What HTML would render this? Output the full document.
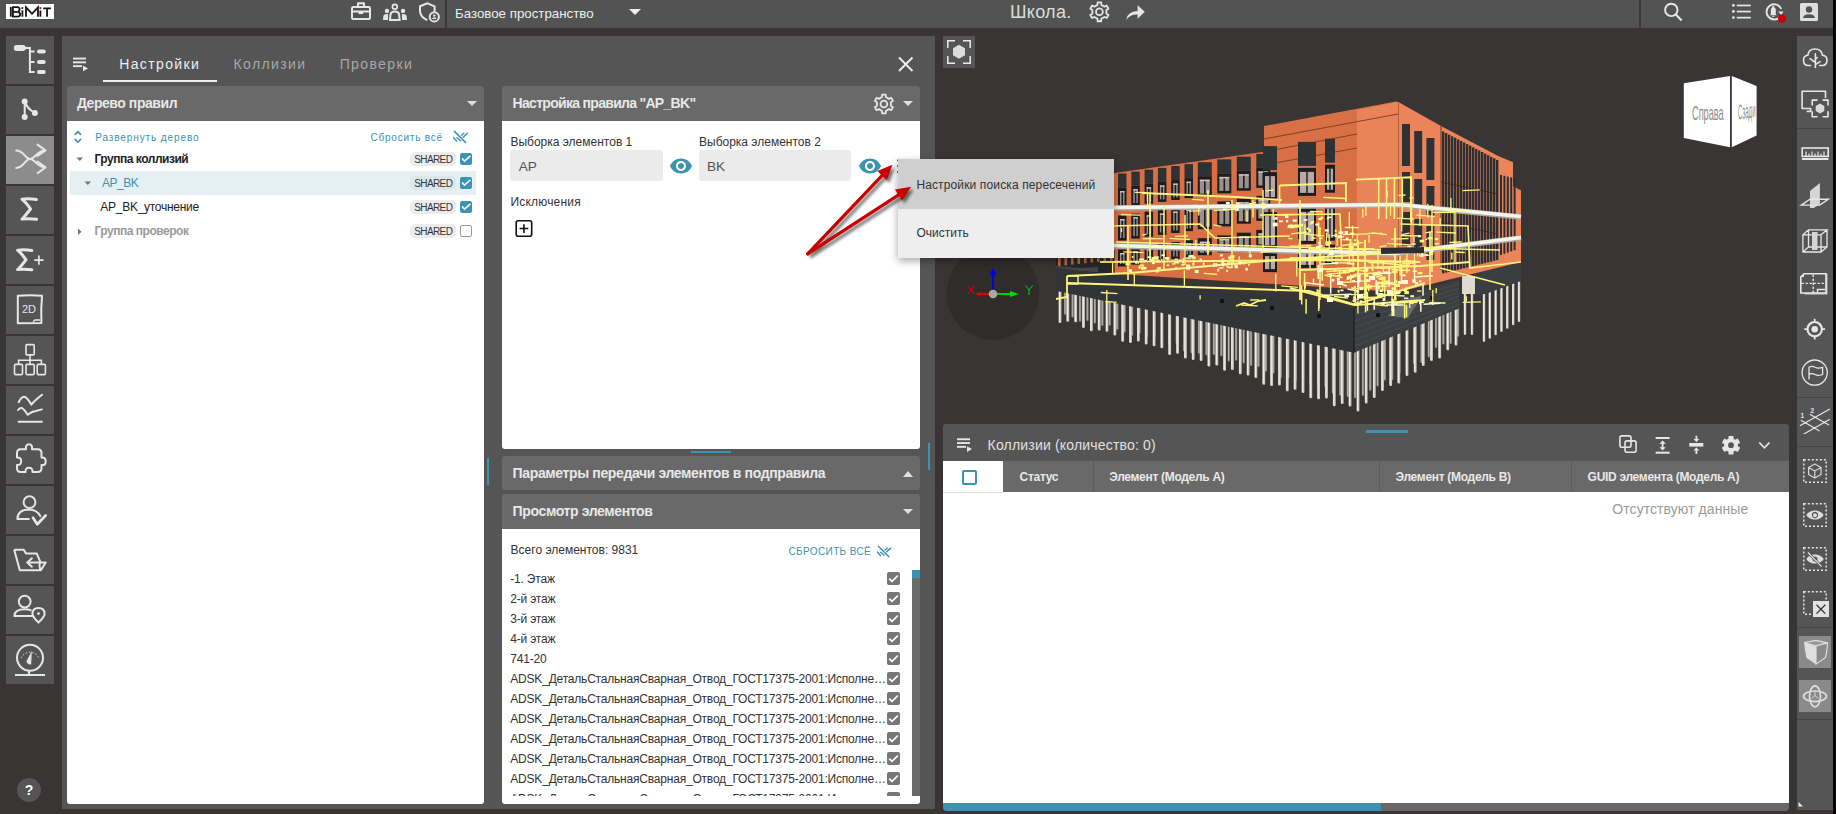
<!DOCTYPE html>
<html><head><meta charset="utf-8"><style>
html,body{margin:0;padding:0;}
body{width:1836px;height:814px;overflow:hidden;position:relative;background:#393534;font-family:"Liberation Sans", sans-serif;}
</style></head><body>
<div style="position:absolute;left:0px;top:0px;width:1836px;height:28px;background:#535353;"></div><div style="position:absolute;left:6px;top:4px;width:48px;height:15px;background:#ffffff;"></div><svg style="position:absolute;left:6px;top:4px;" width="48" height="15" viewBox="0 0 48 15"><g fill="none" stroke="#151515" stroke-width="1.8"><path d="M4.8 3 V12.7"/><path d="M6.9 3.2 H11 Q13.6 3.2 13.6 5.5 Q13.6 7.7 11.2 7.8 Q14.1 7.9 14.1 10.2 Q14.1 12.6 11.2 12.6 H6.9 Z M6.9 7.8 H11"/><path d="M16.4 6.4 V12.7"/><path d="M20 12.7 V3.4 L26 9.8 L32 3.4 V12.7"/><path d="M34.4 6.4 V12.7"/><path d="M37.2 4.3 H44.9 M41.05 4.3 V12.7"/></g><circle cx="16.4" cy="4.1" r="1" fill="#151515"/><circle cx="34.4" cy="4.1" r="1.1" fill="#e00000"/></svg><div style="position:absolute;left:445px;top:0px;width:2px;height:28px;background:#3b3837;"></div><div style="position:absolute;left:1639px;top:0px;width:2px;height:28px;background:#3b3837;"></div><div style="position:absolute;left:455px;top:3.69px;font-size:13.3px;line-height:19px;color:#eeeeee;font-weight:400;letter-spacing:0px;white-space:nowrap;">Базовое пространство</div><svg style="position:absolute;left:629px;top:9px;" width="12" height="6" viewBox="0 0 12 6"><path d="M0 0 L12 0 L6 6 Z" fill="#eee"/></svg><div style="position:absolute;left:1010px;top:-0.04px;font-size:18px;line-height:25px;color:#dddddd;font-weight:400;letter-spacing:0.3px;white-space:nowrap;">Школа.</div><div style="position:absolute;left:6px;top:36px;width:48px;height:48px;background:#555555;"></div><div style="position:absolute;left:6px;top:86px;width:48px;height:48px;background:#555555;"></div><div style="position:absolute;left:6px;top:136px;width:48px;height:48px;background:#8c8c8c;"></div><div style="position:absolute;left:6px;top:186px;width:48px;height:48px;background:#555555;"></div><div style="position:absolute;left:6px;top:236px;width:48px;height:48px;background:#555555;"></div><div style="position:absolute;left:6px;top:286px;width:48px;height:48px;background:#555555;"></div><div style="position:absolute;left:6px;top:336px;width:48px;height:48px;background:#555555;"></div><div style="position:absolute;left:6px;top:386px;width:48px;height:48px;background:#555555;"></div><div style="position:absolute;left:6px;top:436px;width:48px;height:48px;background:#555555;"></div><div style="position:absolute;left:6px;top:486px;width:48px;height:48px;background:#555555;"></div><div style="position:absolute;left:6px;top:536px;width:48px;height:48px;background:#555555;"></div><div style="position:absolute;left:6px;top:586px;width:48px;height:48px;background:#555555;"></div><div style="position:absolute;left:6px;top:636px;width:48px;height:48px;background:#555555;"></div><div style="position:absolute;left:17px;top:778px;width:24px;height:24px;border-radius:50%;background:#555;color:#fff;font-weight:700;font-size:14px;line-height:24px;text-align:center;">?</div><div style="position:absolute;left:62px;top:36px;width:873px;height:773px;background:#555555;"></div><div style="position:absolute;left:119.2px;top:54.15px;font-size:14px;line-height:20px;color:#eeeeee;font-weight:400;letter-spacing:1.37px;white-space:nowrap;">Настройки</div><div style="position:absolute;left:233.6px;top:54.15px;font-size:14px;line-height:20px;color:#a8a8a8;font-weight:400;letter-spacing:1.37px;white-space:nowrap;">Коллизии</div><div style="position:absolute;left:339.7px;top:54.15px;font-size:14px;line-height:20px;color:#a8a8a8;font-weight:400;letter-spacing:1.37px;white-space:nowrap;">Проверки</div><div style="position:absolute;left:103px;top:80px;width:114px;height:2px;background:#eeeeee;"></div><div style="position:absolute;left:67px;top:86px;width:417px;height:35px;background:#696969;border-radius:3px 3px 0 0;"></div><div style="position:absolute;left:67px;top:121px;width:417px;height:683px;background:#ffffff;border-radius:0 0 3px 3px;"></div><div style="position:absolute;left:76.9px;top:92.65px;font-size:14px;line-height:20px;color:#e8e8e8;font-weight:700;letter-spacing:-0.45px;white-space:nowrap;">Дерево правил</div><svg style="position:absolute;left:467px;top:101px;" width="10" height="5" viewBox="0 0 10 5"><path d="M0 0 L10 0 L5 5 Z" fill="#e0e0e0"/></svg><div style="position:absolute;left:95.2px;top:130.53px;font-size:10px;line-height:14px;color:#3a93b3;font-weight:400;letter-spacing:0.9px;white-space:nowrap;">Развернуть дерево</div><div style="position:absolute;left:370.4px;top:130.53px;font-size:10px;line-height:14px;color:#3a93b3;font-weight:400;letter-spacing:0.8px;white-space:nowrap;">Сбросить всё</div><div style="position:absolute;left:70px;top:171px;width:406px;height:24px;background:#e5f0f3;"></div><div style="position:absolute;left:94.4px;top:150.94px;font-size:12px;line-height:17px;color:#222;font-weight:700;letter-spacing:-0.47px;white-space:nowrap;">Группа коллизий</div><div style="position:absolute;left:102px;top:174.94px;font-size:12px;line-height:17px;color:#3a93b3;font-weight:400;letter-spacing:-0.5px;white-space:nowrap;">AP_BK</div><div style="position:absolute;left:100.3px;top:198.94px;font-size:12px;line-height:17px;color:#222;font-weight:400;letter-spacing:-0.27px;white-space:nowrap;">AP_BK_уточнение</div><div style="position:absolute;left:94.4px;top:222.94px;font-size:12px;line-height:17px;color:#9a9a9a;font-weight:700;letter-spacing:-0.47px;white-space:nowrap;">Группа проверок</div><div style="position:absolute;left:410px;top:152px;width:46px;height:14px;background:#ececec;border-radius:5px;"></div><div style="position:absolute;left:414.3px;top:152.73px;font-size:10px;line-height:14px;color:#333;font-weight:400;letter-spacing:-0.62px;white-space:nowrap;">SHARED</div><div style="position:absolute;left:460px;top:153px;width:12px;height:12px;background:#3a93b3;border-radius:2px;"></div><div style="position:absolute;left:410px;top:176px;width:46px;height:14px;background:#dde7ea;border-radius:5px;"></div><div style="position:absolute;left:414.3px;top:176.73px;font-size:10px;line-height:14px;color:#333;font-weight:400;letter-spacing:-0.62px;white-space:nowrap;">SHARED</div><div style="position:absolute;left:460px;top:177px;width:12px;height:12px;background:#3a93b3;border-radius:2px;"></div><div style="position:absolute;left:410px;top:200px;width:46px;height:14px;background:#ececec;border-radius:5px;"></div><div style="position:absolute;left:414.3px;top:200.73px;font-size:10px;line-height:14px;color:#333;font-weight:400;letter-spacing:-0.62px;white-space:nowrap;">SHARED</div><div style="position:absolute;left:460px;top:201px;width:12px;height:12px;background:#3a93b3;border-radius:2px;"></div><div style="position:absolute;left:410px;top:224px;width:46px;height:14px;background:#ececec;border-radius:5px;"></div><div style="position:absolute;left:414.3px;top:224.73px;font-size:10px;line-height:14px;color:#333;font-weight:400;letter-spacing:-0.62px;white-space:nowrap;">SHARED</div><div style="position:absolute;left:460px;top:225px;width:12px;height:12px;background:#fff;border:1px solid #999;box-sizing:border-box;border-radius:2px;"></div><div style="position:absolute;left:502px;top:86px;width:418px;height:35px;background:#696969;border-radius:3px 3px 0 0;"></div><div style="position:absolute;left:502px;top:121px;width:418px;height:328px;background:#ffffff;border-radius:0 0 3px 3px;"></div><div style="position:absolute;left:512.6px;top:92.65px;font-size:14px;line-height:20px;color:#e8e8e8;font-weight:700;letter-spacing:-0.7px;white-space:nowrap;">Настройка правила "AP_BK"</div><svg style="position:absolute;left:903px;top:101px;" width="10" height="5" viewBox="0 0 10 5"><path d="M0 0 L10 0 L5 5 Z" fill="#e0e0e0"/></svg><div style="position:absolute;left:510.4px;top:134.34px;font-size:12px;line-height:17px;color:#333;font-weight:400;letter-spacing:0px;white-space:nowrap;">Выборка элементов 1</div><div style="position:absolute;left:699px;top:134.34px;font-size:12px;line-height:17px;color:#333;font-weight:400;letter-spacing:0px;white-space:nowrap;">Выборка элементов 2</div><div style="position:absolute;left:510px;top:150px;width:153px;height:31px;background:#ebebeb;border-radius:3px;"></div><div style="position:absolute;left:699px;top:150px;width:152px;height:31px;background:#ebebeb;border-radius:3px;"></div><div style="position:absolute;left:518.8px;top:156.79px;font-size:13.6px;line-height:19px;color:#555;font-weight:400;letter-spacing:0px;white-space:nowrap;">AP</div><div style="position:absolute;left:707px;top:156.79px;font-size:13.6px;line-height:19px;color:#555;font-weight:400;letter-spacing:0px;white-space:nowrap;">BK</div><div style="position:absolute;left:510.4px;top:194.34px;font-size:12px;line-height:17px;color:#333;font-weight:400;letter-spacing:0.2px;white-space:nowrap;">Исключения</div><div style="position:absolute;left:691px;top:451px;width:40px;height:2px;background:#3a93b3;"></div><div style="position:absolute;left:502px;top:456px;width:418px;height:34px;background:#696969;border-radius:3px;"></div><div style="position:absolute;left:512.6px;top:463.35px;font-size:14px;line-height:20px;color:#e8e8e8;font-weight:700;letter-spacing:-0.37px;white-space:nowrap;">Параметры передачи элементов в подправила</div><svg style="position:absolute;left:903px;top:471px;" width="10" height="6" viewBox="0 0 10 6"><path d="M0 6 L10 6 L5 0 Z" fill="#e0e0e0"/></svg><div style="position:absolute;left:502px;top:494px;width:418px;height:35px;background:#696969;border-radius:3px 3px 0 0;"></div><div style="position:absolute;left:502px;top:529px;width:418px;height:275px;background:#ffffff;border-radius:0 0 3px 3px;"></div><div style="position:absolute;left:512.6px;top:501.15px;font-size:14px;line-height:20px;color:#e8e8e8;font-weight:700;letter-spacing:-0.37px;white-space:nowrap;">Просмотр элементов</div><svg style="position:absolute;left:903px;top:509px;" width="10" height="5" viewBox="0 0 10 5"><path d="M0 0 L10 0 L5 5 Z" fill="#e0e0e0"/></svg><div style="position:absolute;left:510.6px;top:541.54px;font-size:12px;line-height:17px;color:#333;font-weight:400;letter-spacing:0px;white-space:nowrap;">Всего элементов: 9831</div><div style="position:absolute;left:788.5px;top:544.53px;font-size:10px;line-height:14px;color:#3a93b3;font-weight:400;letter-spacing:0.37px;white-space:nowrap;">СБРОСИТЬ ВСЁ</div><div style="position:absolute;left:502px;top:566px;width:410px;height:230px;overflow:hidden;"><div style="position:absolute;left:8.3px;top:5.24px;width:377px;font-size:12px;line-height:16px;color:#333;white-space:nowrap;overflow:hidden;text-overflow:ellipsis;letter-spacing:-0.2px">-1. Этаж</div><div style="position:absolute;left:384.7px;top:6px;width:13px;height:13px;background:#767676;border-radius:2px;"></div><div style="position:absolute;left:8.3px;top:25.24px;width:377px;font-size:12px;line-height:16px;color:#333;white-space:nowrap;overflow:hidden;text-overflow:ellipsis;letter-spacing:-0.2px">2-й этаж</div><div style="position:absolute;left:384.7px;top:26px;width:13px;height:13px;background:#767676;border-radius:2px;"></div><div style="position:absolute;left:8.3px;top:45.24px;width:377px;font-size:12px;line-height:16px;color:#333;white-space:nowrap;overflow:hidden;text-overflow:ellipsis;letter-spacing:-0.2px">3-й этаж</div><div style="position:absolute;left:384.7px;top:46px;width:13px;height:13px;background:#767676;border-radius:2px;"></div><div style="position:absolute;left:8.3px;top:65.24px;width:377px;font-size:12px;line-height:16px;color:#333;white-space:nowrap;overflow:hidden;text-overflow:ellipsis;letter-spacing:-0.2px">4-й этаж</div><div style="position:absolute;left:384.7px;top:66px;width:13px;height:13px;background:#767676;border-radius:2px;"></div><div style="position:absolute;left:8.3px;top:85.24px;width:377px;font-size:12px;line-height:16px;color:#333;white-space:nowrap;overflow:hidden;text-overflow:ellipsis;letter-spacing:-0.2px">741-20</div><div style="position:absolute;left:384.7px;top:86px;width:13px;height:13px;background:#767676;border-radius:2px;"></div><div style="position:absolute;left:8.3px;top:105.24px;width:377px;font-size:12px;line-height:16px;color:#333;white-space:nowrap;overflow:hidden;text-overflow:ellipsis;letter-spacing:-0.2px">ADSK_ДетальСтальнаяСварная_Отвод_ГОСТ17375-2001:Исполнение</div><div style="position:absolute;left:384.7px;top:106px;width:13px;height:13px;background:#767676;border-radius:2px;"></div><div style="position:absolute;left:8.3px;top:125.24px;width:377px;font-size:12px;line-height:16px;color:#333;white-space:nowrap;overflow:hidden;text-overflow:ellipsis;letter-spacing:-0.2px">ADSK_ДетальСтальнаяСварная_Отвод_ГОСТ17375-2001:Исполнение</div><div style="position:absolute;left:384.7px;top:126px;width:13px;height:13px;background:#767676;border-radius:2px;"></div><div style="position:absolute;left:8.3px;top:145.24px;width:377px;font-size:12px;line-height:16px;color:#333;white-space:nowrap;overflow:hidden;text-overflow:ellipsis;letter-spacing:-0.2px">ADSK_ДетальСтальнаяСварная_Отвод_ГОСТ17375-2001:Исполнение</div><div style="position:absolute;left:384.7px;top:146px;width:13px;height:13px;background:#767676;border-radius:2px;"></div><div style="position:absolute;left:8.3px;top:165.24px;width:377px;font-size:12px;line-height:16px;color:#333;white-space:nowrap;overflow:hidden;text-overflow:ellipsis;letter-spacing:-0.2px">ADSK_ДетальСтальнаяСварная_Отвод_ГОСТ17375-2001:Исполнение</div><div style="position:absolute;left:384.7px;top:166px;width:13px;height:13px;background:#767676;border-radius:2px;"></div><div style="position:absolute;left:8.3px;top:185.24px;width:377px;font-size:12px;line-height:16px;color:#333;white-space:nowrap;overflow:hidden;text-overflow:ellipsis;letter-spacing:-0.2px">ADSK_ДетальСтальнаяСварная_Отвод_ГОСТ17375-2001:Исполнение</div><div style="position:absolute;left:384.7px;top:186px;width:13px;height:13px;background:#767676;border-radius:2px;"></div><div style="position:absolute;left:8.3px;top:205.24px;width:377px;font-size:12px;line-height:16px;color:#333;white-space:nowrap;overflow:hidden;text-overflow:ellipsis;letter-spacing:-0.2px">ADSK_ДетальСтальнаяСварная_Отвод_ГОСТ17375-2001:Исполнение</div><div style="position:absolute;left:384.7px;top:206px;width:13px;height:13px;background:#767676;border-radius:2px;"></div><div style="position:absolute;left:8.3px;top:225.24px;width:377px;font-size:12px;line-height:16px;color:#333;white-space:nowrap;overflow:hidden;text-overflow:ellipsis;letter-spacing:-0.2px">ADSK_ДетальСтальнаяСварная_Отвод_ГОСТ17375-2001:Исполнение</div><div style="position:absolute;left:384.7px;top:226px;width:13px;height:13px;background:#767676;border-radius:2px;"></div></div><div style="position:absolute;left:912px;top:570px;width:8px;height:226px;background:#6b6b6b;"></div><div style="position:absolute;left:912px;top:570px;width:8px;height:8px;background:#3a93b3;"></div><div style="position:absolute;left:487px;top:458px;width:2px;height:27px;background:#3a93b3;"></div><div style="position:absolute;left:928px;top:443px;width:2px;height:27px;background:#3a93b3;"></div><div style="position:absolute;left:943px;top:36px;width:32px;height:32px;background:#555555;"></div><div style="position:absolute;left:943px;top:424px;width:846px;height:37px;background:#555555;border-radius:3px 3px 0 0;"></div><div style="position:absolute;left:1366px;top:430px;width:42px;height:3px;background:#3a93b3;"></div><div style="position:absolute;left:987.6px;top:435.15px;font-size:14px;line-height:20px;color:#e0e0e0;font-weight:400;letter-spacing:0.18px;white-space:nowrap;">Коллизии (количество: 0)</div><div style="position:absolute;left:943px;top:461px;width:846px;height:342px;background:#ffffff;"></div><div style="position:absolute;left:1003px;top:461px;width:786px;height:31px;background:#696969;"></div><div style="position:absolute;left:943px;top:492px;width:60px;height:1px;background:#dddddd;"></div><div style="position:absolute;left:1093px;top:461px;width:1px;height:31px;background:#5a5a5a;"></div><div style="position:absolute;left:1379px;top:461px;width:1px;height:31px;background:#5a5a5a;"></div><div style="position:absolute;left:1571px;top:461px;width:1px;height:31px;background:#5a5a5a;"></div><div style="position:absolute;left:1019.6px;top:469.04px;font-size:12px;line-height:17px;color:#e8e8e8;font-weight:700;letter-spacing:-0.3px;white-space:nowrap;">Статус</div><div style="position:absolute;left:1109.2px;top:469.04px;font-size:12px;line-height:17px;color:#e8e8e8;font-weight:700;letter-spacing:-0.3px;white-space:nowrap;">Элемент (Модель А)</div><div style="position:absolute;left:1395.5px;top:469.04px;font-size:12px;line-height:17px;color:#e8e8e8;font-weight:700;letter-spacing:-0.3px;white-space:nowrap;">Элемент (Модель В)</div><div style="position:absolute;left:1587.6px;top:469.04px;font-size:12px;line-height:17px;color:#e8e8e8;font-weight:700;letter-spacing:-0.3px;white-space:nowrap;">GUID элемента (Модель А)</div><div style="position:absolute;left:961.5px;top:469.5px;width:15px;height:15px;border:2px solid #3a93b3;box-sizing:border-box;border-radius:2px;"></div><div style="position:absolute;left:1612.3px;top:498.85px;font-size:14px;line-height:20px;color:#9a9a9a;font-weight:400;letter-spacing:0.07px;white-space:nowrap;">Отсутствуют данные</div><div style="position:absolute;left:943px;top:803px;width:846px;height:8px;background:#686868;border-radius:0 0 4px 4px;"></div><div style="position:absolute;left:943px;top:803px;width:438px;height:8px;background:#3a93b3;border-radius:0 0 0 4px;"></div><div style="position:absolute;left:1797px;top:36px;width:36px;height:774px;background:#555555;"></div><div style="position:absolute;left:1797px;top:128px;width:36px;height:1px;background:#444;"></div><div style="position:absolute;left:1797px;top:397px;width:36px;height:1px;background:#444;"></div><div style="position:absolute;left:1797px;top:446px;width:36px;height:1px;background:#444;"></div><div style="position:absolute;left:1797px;top:627px;width:36px;height:1px;background:#444;"></div><div style="position:absolute;left:1797px;top:719px;width:36px;height:1px;background:#444;"></div><div style="position:absolute;left:1799px;top:636px;width:32px;height:32px;background:#8a8a8a;"></div><div style="position:absolute;left:1799px;top:680px;width:32px;height:32px;background:#8a8a8a;"></div><div style="position:absolute;left:1833px;top:0px;width:3px;height:814px;background:#050505;"></div><svg style="position:absolute;left:348px;top:0px;" width="26" height="24" viewBox="0 0 26 24"><g fill="none" stroke="#e6e6e6" stroke-width="2" stroke-linejoin="round"><rect x="4" y="7" width="18" height="12" rx="1.2"/><path d="M10 7 V3.2 H16 V7"/><path d="M4 11.5 H22"/></g><rect x="10.6" y="11.5" width="4.5" height="2.6" fill="#e6e6e6"/></svg><svg style="position:absolute;left:380px;top:0px;" width="30" height="24" viewBox="0 0 30 24"><g fill="none" stroke="#e6e6e6" stroke-width="2"><circle cx="14.8" cy="6.8" r="2.4" stroke-width="1.7"/><path d="M10 20 L10.5 14.5 Q11 11.6 14.8 11.6 Q18.6 11.6 19.1 14.5 L19.6 20 Z"/></g><g fill="#e6e6e6"><circle cx="7" cy="10.9" r="2.2"/><circle cx="23" cy="10.9" r="2.2"/><path d="M3 20 L3.3 16 Q3.8 14 7.2 14 L8.1 14 L8 20 Z"/><path d="M27 20 L26.7 16 Q26.2 14 22.8 14 L21.9 14 L22 20 Z"/></g></svg><svg style="position:absolute;left:418px;top:0px;" width="24" height="24" viewBox="0 0 24 24"><path d="M9.3 20.2 Q2 16.8 2 11 V6.3 L9.5 3.3 L16.6 6.3 V11.6" fill="none" stroke="#e6e6e6" stroke-width="2" stroke-linejoin="round"/><circle cx="16.3" cy="16.9" r="4.6" fill="#535353" stroke="#e6e6e6" stroke-width="2"/><circle cx="16.3" cy="15.6" r="1.2" fill="#e6e6e6"/><path d="M14 19 Q14.3 17.3 16.3 17.3 Q18.3 17.3 18.6 19 Z" fill="#e6e6e6"/></svg><svg style="position:absolute;left:1087px;top:0px;" width="25" height="24" viewBox="0 0 25 24"><path d="M10.46 4.87 L10.60 2.37 L14.20 2.37 L14.34 4.87 L17.44 6.66 L19.67 5.53 L21.47 8.64 L19.37 10.01 L19.37 13.59 L21.47 14.96 L19.67 18.07 L17.44 16.94 L14.34 18.73 L14.20 21.23 L10.60 21.23 L10.46 18.73 L7.36 16.94 L5.13 18.07 L3.33 14.96 L5.43 13.59 L5.43 10.01 L3.33 8.64 L5.13 5.53 L7.36 6.66 Z" fill="none" stroke="#e6e6e6" stroke-width="1.8" stroke-linejoin="round"/><circle cx="12.4" cy="11.8" r="3.4" fill="none" stroke="#e6e6e6" stroke-width="1.8"/></svg><svg style="position:absolute;left:1124px;top:2px;" width="24" height="20" viewBox="0 0 24 20"><path d="M2.2 17.8 Q3.5 9.5 13.6 9.1 L13.6 3.2 L20.8 9.8 L13.6 16.8 L13.6 12.6 Q6.6 12.2 2.2 17.8 Z" fill="#e6e6e6"/></svg><svg style="position:absolute;left:1660px;top:0px;" width="26" height="24" viewBox="0 0 26 24"><circle cx="11.3" cy="9.9" r="6.2" fill="none" stroke="#e6e6e6" stroke-width="1.9"/><path d="M15.6 14.3 L21.6 20.5" stroke="#e6e6e6" stroke-width="2.1"/></svg><svg style="position:absolute;left:1730px;top:0px;" width="24" height="24" viewBox="0 0 24 24"><g fill="#e6e6e6"><circle cx="3.4" cy="5.4" r="1.4"/><circle cx="3.4" cy="11.5" r="1.4"/><circle cx="3.4" cy="17.6" r="1.4"/><rect x="6.8" y="4.6" width="14" height="1.7"/><rect x="6.8" y="10.7" width="14" height="1.7"/><rect x="6.8" y="16.8" width="14" height="1.7"/></g></svg><svg style="position:absolute;left:1762px;top:0px;" width="28" height="26" viewBox="0 0 28 26"><path d="M18.2 16.5 A7.6 7.6 0 1 1 19.2 9" fill="none" stroke="#e6e6e6" stroke-width="1.9"/><path d="M16 11.5 L21.5 11.5 L19.3 15 Z" fill="#e6e6e6"/><path d="M8 15.2 L8.8 14 V10.5 Q8.8 7.3 11.3 7 Q13.8 7.3 13.8 10.5 V14 L14.6 15.2 Z" fill="#e6e6e6"/><circle cx="11.3" cy="6.6" r="0.9" fill="#e6e6e6"/><rect x="10.2" y="15.8" width="2.2" height="1" fill="#e6e6e6"/><circle cx="20" cy="18.7" r="4.1" fill="#c8000a"/></svg><svg style="position:absolute;left:1799px;top:2px;" width="20" height="20" viewBox="0 0 20 20"><rect x="1" y="1" width="18" height="18" rx="1.6" fill="#dedede"/><circle cx="10" cy="7.5" r="3.2" fill="#535353"/><path d="M4 16 Q4.3 12.2 10 12.2 Q15.7 12.2 16 16 Z" fill="#535353"/></svg><svg style="position:absolute;left:6px;top:36px;" width="48" height="48" viewBox="0 0 48 48"><rect x="7.8" y="9" width="12" height="6" rx="3" fill="#e6e6e6"/><path d="M19 12 H23.9 V35.9 H28.6 M23.9 15.6 H28.6 M23.9 25.9 H28.6" fill="none" stroke="#e6e6e6" stroke-width="2"/><rect x="31" y="13.6" width="8.7" height="4" rx="2" fill="#e6e6e6"/><rect x="31" y="23.9" width="8.7" height="4" rx="2" fill="#e6e6e6"/><rect x="31" y="33.9" width="8.7" height="4" rx="2" fill="#e6e6e6"/></svg><svg style="position:absolute;left:6px;top:86px;" width="48" height="48" viewBox="0 0 48 48"><path d="M18.7 15.6 V30.9 M18.7 15.6 Q21 22.5 28.9 27" fill="none" stroke="#e6e6e6" stroke-width="2" stroke-linecap="round" stroke-linejoin="round"/><circle cx="18.7" cy="15.6" r="3" fill="#e6e6e6"/><circle cx="18.7" cy="30.9" r="3" fill="#e6e6e6"/><circle cx="28.9" cy="27" r="3" fill="#e6e6e6"/></svg><svg style="position:absolute;left:6px;top:136px;" width="48" height="48" viewBox="0 0 48 48"><path d="M10.2 14.4 C18 14.4 19 22.9 24 22.9 C29 22.9 31 14.4 39.3 14.4 M10.2 31.9 C18 31.9 19 22.9 24 22.9 C29 22.9 31 31.4 39.3 31.4 M31.5 8.6 L39.5 14.4 L31.5 19.9 M31.5 25.5 L39.5 31.4 L31.5 37.2" fill="none" stroke="#e6e6e6" stroke-width="2" stroke-linecap="round" stroke-linejoin="round"/></svg><svg style="position:absolute;left:6px;top:186px;" width="48" height="48" viewBox="0 0 48 48"><path d="M16 13.2 Q23 12.3 30.4 13.6 M16.6 13.6 Q21 17.5 24.6 23 Q20.5 28 16.6 32.6 M16 33 Q23 32.2 30.6 33.2" fill="none" stroke="#e6e6e6" stroke-width="3" stroke-linecap="round" stroke-linejoin="round"/></svg><svg style="position:absolute;left:6px;top:236px;" width="48" height="48" viewBox="0 0 48 48"><path d="M11.6 14.2 Q18.5 13.3 25.8 14.6 M12.2 14.6 Q16.4 18.5 20 23.8 Q16 29 12.2 33.2 M11.6 33.6 Q18.5 32.8 25.8 33.8" fill="none" stroke="#e6e6e6" stroke-width="3" stroke-linecap="round" stroke-linejoin="round"/><path d="M28.3 24.1 H37.6 M32.9 19.5 V28.8" stroke="#e6e6e6" stroke-width="1.7"/></svg><svg style="position:absolute;left:6px;top:286px;" width="48" height="48" viewBox="0 0 48 48"><path d="M11.8 9.8 Q24 8.6 36 9.8 Q34.8 23 35.4 37 L11.8 37.2 Z" fill="none" stroke="#e6e6e6" stroke-width="2" stroke-linecap="round" stroke-linejoin="round"/><text x="23" y="27.2" font-family="Liberation Sans" font-size="11" fill="#e6e6e6" text-anchor="middle">2D</text><path d="M27 36 L29 34 H34" stroke="#e6e6e6" stroke-width="1.4" fill="none"/></svg><svg style="position:absolute;left:6px;top:336px;" width="48" height="48" viewBox="0 0 48 48"><g fill="none" stroke="#e6e6e6" stroke-width="1.6"><rect x="20" y="8.6" width="8.2" height="10.3" rx="1"/><path d="M24.1 18.9 V28.4 M12.6 28.4 V24.2 H35.4 V28.4"/><rect x="8.5" y="28.4" width="8" height="10.2" rx="1"/><rect x="20" y="28.4" width="8.2" height="10.2" rx="1"/><rect x="31.2" y="28.4" width="8.2" height="10.2" rx="1"/></g></svg><svg style="position:absolute;left:6px;top:386px;" width="48" height="48" viewBox="0 0 48 48"><path d="M12.6 16.2 Q15.5 11 18 10.8 Q21 11 25.3 18.6 Q29 14 36.1 8.7 M12 24 Q14 21.5 16 22 Q19 24 21.7 28.8 Q26 25.5 28.9 25.2 L35.9 23.4 M12.6 35.7 H35.9" fill="none" stroke="#e6e6e6" stroke-width="2" stroke-linecap="round" stroke-linejoin="round"/></svg><svg style="position:absolute;left:6px;top:436px;" width="48" height="48" viewBox="0 0 48 48"><path d="M11 17 Q11 13.2 14.5 13.2 H20 Q19.4 8.3 23 8.3 Q26.6 8.3 26 13.2 H31.7 Q35.5 13.2 35.5 17 V21.5 Q39.7 21 39.7 25.3 Q39.7 29.6 35.5 29.1 V32.3 Q35.5 36 31.7 36 H26.5 Q26.8 31.8 23 31.8 Q19.2 31.8 19.5 36 H14.5 Q11 36 11 32.3 V29.1 Q15.2 29.3 15.2 25.3 Q15.2 21.3 11 21.5 Z" fill="none" stroke="#e6e6e6" stroke-width="2" stroke-linecap="round" stroke-linejoin="round"/></svg><svg style="position:absolute;left:6px;top:486px;" width="48" height="48" viewBox="0 0 48 48"><circle cx="23.5" cy="16.2" r="5.9" fill="none" stroke="#e6e6e6" stroke-width="2" stroke-linecap="round" stroke-linejoin="round"/><path d="M22.8 33 H11.4 Q11.6 23.4 22.9 23.4 Q31 23.6 34.3 30" fill="none" stroke="#e6e6e6" stroke-width="2" stroke-linecap="round" stroke-linejoin="round"/><path d="M27 31.8 L31.3 38.2 L39.7 29.4" fill="none" stroke="#e6e6e6" stroke-width="2.8" stroke-linecap="round" stroke-linejoin="round"/></svg><svg style="position:absolute;left:6px;top:536px;" width="48" height="48" viewBox="0 0 48 48"><path d="M8.4 14.4 Q8.4 13.8 9.2 13.8 H17.8 L19.9 17.4 H30.7 L34.3 25.9 M39.7 26.5 L34.9 34.3 H13.8 L8.4 14.4 M34.3 34 Q33 30 33.8 26.5 H39.7 M34.3 26.5 H21.2 M25.9 22.3 L21.2 26.5 L25.9 30.7" fill="none" stroke="#e6e6e6" stroke-width="2" stroke-linecap="round" stroke-linejoin="round"/></svg><svg style="position:absolute;left:6px;top:586px;" width="48" height="48" viewBox="0 0 48 48"><circle cx="18.7" cy="15.6" r="5.9" fill="none" stroke="#e6e6e6" stroke-width="2" stroke-linecap="round" stroke-linejoin="round"/><path d="M27 30 H8.4 Q8.6 23.2 18.7 23.2 Q22.5 23.2 24.7 24.2" fill="none" stroke="#e6e6e6" stroke-width="2" stroke-linecap="round" stroke-linejoin="round"/><path d="M32.5 36.6 Q26.4 31 26.4 27.6 Q26.4 21.9 32.5 21.9 Q38.6 21.9 38.6 27.6 Q38.6 31 32.5 36.6 Z" fill="none" stroke="#e6e6e6" stroke-width="2" stroke-linecap="round" stroke-linejoin="round"/><circle cx="32.5" cy="27.6" r="1.4" fill="#e6e6e6"/></svg><svg style="position:absolute;left:6px;top:636px;" width="48" height="48" viewBox="0 0 48 48"><circle cx="24" cy="21.8" r="13" fill="none" stroke="#e6e6e6" stroke-width="2"/><path d="M9 39 H39 M23 34.8 V39" stroke="#e6e6e6" stroke-width="2.2"/><path d="M20.3 25.8 L25.8 14.8 L25.2 28.3 Q22.5 29.5 20.3 25.8 Z" fill="#e6e6e6"/><path d="M15 22 A10 10 0 0 1 33 22" fill="none" stroke="#e6e6e6" stroke-width="1" stroke-dasharray="1.5 1.8"/></svg><svg style="position:absolute;left:70px;top:55px;" width="20" height="18" viewBox="0 0 20 18"><g fill="#e6e6e6"><rect x="3" y="2.6" width="13" height="1.9"/><rect x="3" y="6.4" width="13" height="1.9"/><rect x="3" y="10.2" width="9" height="1.9"/><path d="M13 10.5 L18 13.4 L13 16.3 Z"/></g></svg><svg style="position:absolute;left:895px;top:54px;" width="22" height="22" viewBox="0 0 22 22"><path d="M4 3.5 L17.5 17 M17.5 3.5 L4 17" stroke="#eeeeee" stroke-width="1.9"/></svg><svg style="position:absolute;left:70px;top:125px;" width="16" height="22" viewBox="0 0 16 22"><path d="M5.2 9.4 L8 6.6 L10.6 9.4 M5.2 14.4 L8 17.2 L10.6 14.4" fill="none" stroke="#3a93b3" stroke-width="1.6" stroke-linecap="round" stroke-linejoin="round"/></svg><svg style="position:absolute;left:453px;top:130px;" width="18" height="16" viewBox="0 0 18 16"><g stroke="#3a93b3" stroke-width="1.5" stroke-linecap="round" transform="scale(1.0)"><path d="M1.4 1.4 L12.5 12.4"/><path d="M0.3 7.4 L3.6 11"/><path d="M3.9 7.7 L7.5 10.8"/><path d="M8.6 5.2 L10.8 3.3"/><path d="M10.2 7.2 L14.4 3.3"/></g></svg><svg style="position:absolute;left:876.5px;top:545px;" width="18" height="16" viewBox="0 0 18 16"><g stroke="#3a93b3" stroke-width="1.5" stroke-linecap="round" transform="scale(0.95)"><path d="M1.4 1.4 L12.5 12.4"/><path d="M0.3 7.4 L3.6 11"/><path d="M3.9 7.7 L7.5 10.8"/><path d="M8.6 5.2 L10.8 3.3"/><path d="M10.2 7.2 L14.4 3.3"/></g></svg><svg style="position:absolute;left:460px;top:153px;" width="12" height="12" viewBox="0 0 12 12"><path d="M2 5.4 L4.5 8.2 L10.4 2.8" fill="none" stroke="#fff" stroke-width="1.6"/></svg><svg style="position:absolute;left:460px;top:177px;" width="12" height="12" viewBox="0 0 12 12"><path d="M2 5.4 L4.5 8.2 L10.4 2.8" fill="none" stroke="#fff" stroke-width="1.6"/></svg><svg style="position:absolute;left:460px;top:201px;" width="12" height="12" viewBox="0 0 12 12"><path d="M2 5.4 L4.5 8.2 L10.4 2.8" fill="none" stroke="#fff" stroke-width="1.6"/></svg><svg style="position:absolute;left:76px;top:156px;" width="8" height="6" viewBox="0 0 8 6"><path d="M0.5 1.5 L7 1.5 L3.75 5 Z" fill="#757575"/></svg><svg style="position:absolute;left:84px;top:180px;" width="8" height="6" viewBox="0 0 8 6"><path d="M0.5 1.5 L7 1.5 L3.75 5 Z" fill="#757575"/></svg><svg style="position:absolute;left:77px;top:227px;" width="6" height="9" viewBox="0 0 6 9"><path d="M1 1.5 L4.6 4.8 L1 8 Z" fill="#757575"/></svg><svg style="position:absolute;left:669px;top:154px;" width="24" height="24" viewBox="0 0 24 24"><path d="M12 4.5C7 4.5 2.73 7.61 1 12c1.73 4.39 6 7.5 11 7.5s9.27-3.11 11-7.5c-1.73-4.39-6-7.5-11-7.5zM12 17c-2.76 0-5-2.24-5-5s2.24-5 5-5 5 2.24 5 5-2.24 5-5 5zm0-8c-1.66 0-3 1.34-3 3s1.34 3 3 3 3-1.34 3-3-1.34-3-3-3z" fill="#3a93b3"/></svg><svg style="position:absolute;left:857.5px;top:154px;" width="24" height="24" viewBox="0 0 24 24"><path d="M12 4.5C7 4.5 2.73 7.61 1 12c1.73 4.39 6 7.5 11 7.5s9.27-3.11 11-7.5c-1.73-4.39-6-7.5-11-7.5zM12 17c-2.76 0-5-2.24-5-5s2.24-5 5-5 5 2.24 5 5-2.24 5-5 5zm0-8c-1.66 0-3 1.34-3 3s1.34 3 3 3 3-1.34 3-3-1.34-3-3-3z" fill="#3a93b3"/></svg><svg style="position:absolute;left:513px;top:218px;" width="22" height="22" viewBox="0 0 22 22"><rect x="3.2" y="2.8" width="15.5" height="15.5" rx="2" fill="none" stroke="#111" stroke-width="1.6"/><path d="M10.95 6.2 V15 M6.6 10.55 H15.3" stroke="#111" stroke-width="1.6"/></svg><svg style="position:absolute;left:893px;top:156px;" width="8" height="22" viewBox="0 0 8 22"><g fill="#444"><rect x="4.1" y="3.6" width="1" height="1.6"/><rect x="4.1" y="9.2" width="1" height="1.6"/><rect x="4.1" y="15.2" width="1" height="1.8"/></g></svg><svg style="position:absolute;left:871px;top:91px;" width="25" height="25" viewBox="0 0 25 25"><path d="M10.96 6.07 L11.10 3.57 L14.70 3.57 L14.84 6.07 L17.94 7.86 L20.17 6.73 L21.97 9.84 L19.87 11.21 L19.87 14.79 L21.97 16.16 L20.17 19.27 L17.94 18.14 L14.84 19.93 L14.70 22.43 L11.10 22.43 L10.96 19.93 L7.86 18.14 L5.63 19.27 L3.83 16.16 L5.93 14.79 L5.93 11.21 L3.83 9.84 L5.63 6.73 L7.86 7.86 Z" fill="none" stroke="#e6e6e6" stroke-width="1.8" stroke-linejoin="round"/><circle cx="12.9" cy="13" r="3.4" fill="none" stroke="#e6e6e6" stroke-width="1.8"/></svg><svg style="position:absolute;left:886.7px;top:572px;" width="13" height="13" viewBox="0 0 13 13"><path d="M2.2 6.6 L5 9.4 L10.8 3.6" fill="none" stroke="#fff" stroke-width="1.6"/></svg><svg style="position:absolute;left:886.7px;top:592px;" width="13" height="13" viewBox="0 0 13 13"><path d="M2.2 6.6 L5 9.4 L10.8 3.6" fill="none" stroke="#fff" stroke-width="1.6"/></svg><svg style="position:absolute;left:886.7px;top:612px;" width="13" height="13" viewBox="0 0 13 13"><path d="M2.2 6.6 L5 9.4 L10.8 3.6" fill="none" stroke="#fff" stroke-width="1.6"/></svg><svg style="position:absolute;left:886.7px;top:632px;" width="13" height="13" viewBox="0 0 13 13"><path d="M2.2 6.6 L5 9.4 L10.8 3.6" fill="none" stroke="#fff" stroke-width="1.6"/></svg><svg style="position:absolute;left:886.7px;top:652px;" width="13" height="13" viewBox="0 0 13 13"><path d="M2.2 6.6 L5 9.4 L10.8 3.6" fill="none" stroke="#fff" stroke-width="1.6"/></svg><svg style="position:absolute;left:886.7px;top:672px;" width="13" height="13" viewBox="0 0 13 13"><path d="M2.2 6.6 L5 9.4 L10.8 3.6" fill="none" stroke="#fff" stroke-width="1.6"/></svg><svg style="position:absolute;left:886.7px;top:692px;" width="13" height="13" viewBox="0 0 13 13"><path d="M2.2 6.6 L5 9.4 L10.8 3.6" fill="none" stroke="#fff" stroke-width="1.6"/></svg><svg style="position:absolute;left:886.7px;top:712px;" width="13" height="13" viewBox="0 0 13 13"><path d="M2.2 6.6 L5 9.4 L10.8 3.6" fill="none" stroke="#fff" stroke-width="1.6"/></svg><svg style="position:absolute;left:886.7px;top:732px;" width="13" height="13" viewBox="0 0 13 13"><path d="M2.2 6.6 L5 9.4 L10.8 3.6" fill="none" stroke="#fff" stroke-width="1.6"/></svg><svg style="position:absolute;left:886.7px;top:752px;" width="13" height="13" viewBox="0 0 13 13"><path d="M2.2 6.6 L5 9.4 L10.8 3.6" fill="none" stroke="#fff" stroke-width="1.6"/></svg><svg style="position:absolute;left:886.7px;top:772px;" width="13" height="13" viewBox="0 0 13 13"><path d="M2.2 6.6 L5 9.4 L10.8 3.6" fill="none" stroke="#fff" stroke-width="1.6"/></svg><svg style="position:absolute;left:943px;top:36px;" width="32" height="32" viewBox="0 0 32 32"><path d="M4.8 12 V4.8 H12 M20 4.8 H27.2 V12 M27.2 20 V27.2 H20 M12 27.2 H4.8 V20" fill="none" stroke="#ececec" stroke-width="1.5"/><path d="M16 8.8 L22 12.3 V19.3 L16 22.8 L10 19.3 V12.3 Z" fill="#dcdcdc"/></svg><svg style="position:absolute;left:955px;top:436px;" width="20" height="18" viewBox="0 0 20 18"><g fill="#e6e6e6"><rect x="2" y="2.3" width="13" height="1.9"/><rect x="2" y="6.1" width="13" height="1.9"/><rect x="2" y="9.9" width="9" height="1.9"/><path d="M12 10.2 L17 13.1 L12 16 Z"/></g></svg><svg style="position:absolute;left:1617px;top:433px;" width="22" height="22" viewBox="0 0 22 22"><g fill="none" stroke="#e6e6e6" stroke-width="1.6"><rect x="2.9" y="2.9" width="11.1" height="11.3" rx="2"/><rect x="8" y="7.9" width="11.1" height="11.3" rx="2"/></g></svg><svg style="position:absolute;left:1653px;top:433px;" width="20" height="22" viewBox="0 0 20 22"><g fill="#e6e6e6"><rect x="2.6" y="4" width="14" height="2"/><rect x="2.6" y="18.7" width="14" height="2"/><path d="M9.6 7.5 L12.8 10.8 H10.5 V14.2 H12.8 L9.6 17.4 L6.4 14.2 H8.7 V10.8 H6.4 Z"/></g></svg><svg style="position:absolute;left:1687px;top:433px;" width="20" height="22" viewBox="0 0 20 22"><g fill="#e6e6e6"><rect x="2.3" y="10" width="14" height="3.6"/><path d="M9.4 9 L12.4 6 H10.3 V2.8 H8.5 V6 H6.4 Z"/><path d="M9.4 14.6 L12.4 17.6 H10.3 V21 H8.5 V17.6 H6.4 Z"/></g></svg><svg style="position:absolute;left:1720px;top:434px;" width="22" height="22" viewBox="0 0 22 22"><path d="M9.09 5.09 L9.08 2.61 L12.92 2.61 L12.91 5.09 L15.33 6.49 L17.48 5.24 L19.40 8.57 L17.25 9.80 L17.25 12.60 L19.40 13.83 L17.48 17.16 L15.33 15.91 L12.91 17.31 L12.92 19.79 L9.08 19.79 L9.09 17.31 L6.67 15.91 L4.52 17.16 L2.60 13.83 L4.75 12.60 L4.75 9.80 L2.60 8.57 L4.52 5.24 L6.67 6.49 Z" fill="#e6e6e6" stroke="#e6e6e6" stroke-width="1.2" stroke-linejoin="round"/><circle cx="11" cy="11.2" r="2.9" fill="#555"/></svg><svg style="position:absolute;left:1757px;top:438px;" width="16" height="14" viewBox="0 0 16 14"><path d="M2.3 4.5 L7.4 9.8 L12.5 4.5" fill="none" stroke="#e6e6e6" stroke-width="1.8"/></svg><svg style="position:absolute;left:1797px;top:36px;" width="36" height="32" viewBox="0 0 36 32"><path d="M13.5 29.5 H11.3 Q6.5 29.5 6.5 24.3 Q6.5 19.8 10.8 19.3 Q11.5 13 18 13 Q24.6 13 25.5 19.3 Q30 19.8 30 24.3 Q30 29.5 25 29.5 H22.7 M18.4 17.8 V35.1 M13 22.7 L18.4 26.5 M23 25.6 L18.4 28.6 M20.1 21.6 L18.4 23.1" fill="none" stroke="#e6e6e6" stroke-width="1.6" stroke-linecap="round" stroke-linejoin="round"/></svg><svg style="position:absolute;left:1797px;top:86px;" width="36" height="32" viewBox="0 0 36 32"><path d="M13.7 22.5 H5.1 V5.3 H28.5 V11.5 M13.7 22.5 V25.4 H10.3" fill="none" stroke="#e6e6e6" stroke-width="1.6" stroke-linecap="round" stroke-linejoin="round"/><path d="M15.2 19 V14.1 H20 M26.2 14.1 H31 V19 M31 25.9 V30.8 H26.2 M20 30.8 H15.2 V25.9" fill="none" stroke="#e6e6e6" stroke-width="1.6" stroke-linecap="round" stroke-linejoin="round"/><path d="M23 17.5 L27.3 20 V25 L23 27.5 L18.7 25 V20 Z" fill="#dcdcdc"/></svg><svg style="position:absolute;left:1797px;top:132px;" width="36" height="32" viewBox="0 0 36 32"><rect x="5.2" y="16" width="26" height="8.4" fill="none" stroke="#e6e6e6" stroke-width="1.6"/><rect x="4.9" y="26" width="26.5" height="2" fill="#e6e6e6"/><g stroke="#e6e6e6" stroke-width="1.2"><path d="M9 24 V19.5 M12 24 V21.5 M15 24 V19.5 M18 24 V21.5 M21 24 V19.5 M24 24 V21.5 M27 24 V19.5"/></g></svg><svg style="position:absolute;left:1797px;top:176px;" width="36" height="32" viewBox="0 0 36 32"><path d="M13 14.9 L22.9 7 V28 L13 34.5 Z" fill="#d6d6d6"/><path d="M4.3 29.1 L13 23.2 H31.4 L22.7 29.1 Z" fill="none" stroke="#e6e6e6" stroke-width="1.4"/><path d="M13 23.2 V29.1 H22.7" fill="#d6d6d6"/></svg><svg style="position:absolute;left:1797px;top:222px;" width="36" height="32" viewBox="0 0 36 32"><g fill="none" stroke="#e6e6e6" stroke-width="1.3"><path d="M5.9 12.8 H24 V30 H5.9 Z M5.9 12.8 L11.5 7.8 H30 L24 12.8 M30 7.8 V25 L24 30 M11.5 7.8 V25 H30 M11.5 25 L5.9 30"/></g><path d="M15 10 H20.5 V28 H15 Z" fill="#d4d4d4"/></svg><svg style="position:absolute;left:1797px;top:266px;" width="36" height="32" viewBox="0 0 36 32"><path d="M7.5 7.8 H30.5 V28.6 H7.5 Z" fill="#bdbdbd"/><path d="M3.8 11 L7 7.8 H29 V27 H3.8 Z" fill="#555" stroke="#e6e6e6" stroke-width="1.6"/><path d="M3.8 11 H7 V7.8" fill="#e6e6e6"/><path d="M16.2 8.5 V27 M4.5 17.4 H28.5" stroke="#e6e6e6" stroke-width="1.4" stroke-dasharray="2.4 1.6"/><path d="M20.5 27 V23.5 H28.5" fill="none" stroke="#e6e6e6" stroke-width="1.4"/></svg><svg style="position:absolute;left:1797px;top:313px;" width="36" height="32" viewBox="0 0 36 32"><circle cx="17.7" cy="16.2" r="7.2" fill="none" stroke="#e6e6e6" stroke-width="2.2"/><circle cx="17.7" cy="16.2" r="3.3" fill="#e6e6e6"/><path d="M17.7 5.8 V8.5 M17.7 23.9 V26.6 M7.3 16.2 H10 M25.4 16.2 H28.1" stroke="#e6e6e6" stroke-width="1.8"/></svg><svg style="position:absolute;left:1797px;top:356px;" width="36" height="32" viewBox="0 0 36 32"><circle cx="17.7" cy="16.6" r="12.6" fill="none" stroke="#e6e6e6" stroke-width="1.3"/><path d="M12 23.6 V11.3 Q15 9.5 18 11.3 Q21 13 25.6 11.4 V18.5 Q21 20.3 18 18.5 Q15 16.8 12 18.5" fill="none" stroke="#e6e6e6" stroke-width="1.3"/></svg><svg style="position:absolute;left:1797px;top:402px;" width="36" height="32" viewBox="0 0 36 32"><g stroke="#e6e6e6" stroke-width="1.2"><path d="M2.9 23.7 L32.9 7 M3.4 34 L32.9 17.3 M3.9 18.3 L22.6 29.1 M12.8 12.2 L31.9 23"/></g><circle cx="8.8" cy="21" r="1.1" fill="#e6e6e6"/><circle cx="17.2" cy="26" r="1.1" fill="#e6e6e6"/><text x="3.6" y="16.2" font-family="Liberation Sans" font-size="6.5" font-weight="700" fill="#e6e6e6">1</text><text x="13.4" y="10.6" font-family="Liberation Sans" font-size="6.5" font-weight="700" fill="#e6e6e6">2</text></svg><svg style="position:absolute;left:1802px;top:458px;" width="26" height="26" viewBox="0 0 26 26"><rect x="1.8" y="1.8" width="22.4" height="22.4" fill="none" stroke="#e6e6e6" stroke-width="1.5" stroke-dasharray="2 2"/></svg><svg style="position:absolute;left:1802px;top:502px;" width="26" height="26" viewBox="0 0 26 26"><rect x="1.8" y="1.8" width="22.4" height="22.4" fill="none" stroke="#e6e6e6" stroke-width="1.5" stroke-dasharray="2 2"/></svg><svg style="position:absolute;left:1802px;top:546px;" width="26" height="26" viewBox="0 0 26 26"><rect x="1.8" y="1.8" width="22.4" height="22.4" fill="none" stroke="#e6e6e6" stroke-width="1.5" stroke-dasharray="2 2"/></svg><svg style="position:absolute;left:1802px;top:590px;" width="26" height="26" viewBox="0 0 26 26"><rect x="1.8" y="1.8" width="22.4" height="22.4" fill="none" stroke="#e6e6e6" stroke-width="1.5" stroke-dasharray="2 2"/></svg><svg style="position:absolute;left:1797px;top:455px;" width="36" height="32" viewBox="0 0 36 32"><path d="M17.8 9 L24 12.5 V19.5 L17.8 23 L11.6 19.5 V12.5 Z M11.6 12.5 L17.8 16 L24 12.5 M17.8 16 V23" fill="none" stroke="#d8d8d8" stroke-width="1.2" stroke-linejoin="round"/></svg><svg style="position:absolute;left:1803.4px;top:503px;" width="24" height="24" viewBox="0 0 24 24"><path d="M12 7.4C8 7.4 4.6 9.6 3.4 12c1.2 2.4 4.6 4.6 8.6 4.6s7.4-2.2 8.6-4.6c-1.2-2.4-4.6-4.6-8.6-4.6zM12 15.2c-1.76 0-3.2-1.44-3.2-3.2s1.44-3.2 3.2-3.2 3.2 1.44 3.2 3.2-1.44 3.2-3.2 3.2zm0-5c-1.1 0-2 .9-2 2s.9 2 2 2 2-.9 2-2-.9-2-2-2z" fill="#dedede"/></svg><svg style="position:absolute;left:1803.4px;top:547px;" width="24" height="24" viewBox="0 0 24 24"><path d="M12 7.4C8 7.4 4.6 9.6 3.4 12c1.2 2.4 4.6 4.6 8.6 4.6s7.4-2.2 8.6-4.6c-1.2-2.4-4.6-4.6-8.6-4.6z" fill="#dedede"/><circle cx="12" cy="12" r="2.5" fill="#555"/><path d="M5 5.5 L18.6 19.6" stroke="#555" stroke-width="2.6"/><path d="M5 5.5 L18.6 19.6" stroke="#dedede" stroke-width="1.3"/></svg><div style="position:absolute;left:1813px;top:601px;width:16px;height:16px;background:#e2e2e2;"></div><svg style="position:absolute;left:1813px;top:601px;" width="16" height="16" viewBox="0 0 16 16"><path d="M3.5 3.8 L12.3 12.6 M12.3 3.8 L3.5 12.6" stroke="#333" stroke-width="1.3"/></svg><svg style="position:absolute;left:1797.5px;top:636px;" width="32" height="32" viewBox="0 0 32 32"><path d="M6.1 6.5 L18 4.3 L29.5 6.8 L18 10 Z" fill="#9a9a9a" stroke="#dedede" stroke-width="1.2"/><path d="M6.1 6.5 L18 10 V28.2 L8.5 22 Q6.6 14 6.1 6.5 Z" fill="#dedede"/><path d="M18 10 L29.5 6.8 Q29 16 27.5 21.5 L18 28.2 Z" fill="#8a8a8a" stroke="#dedede" stroke-width="1.2"/></svg><svg style="position:absolute;left:1799px;top:680px;" width="32" height="32" viewBox="0 0 32 32"><g fill="none" stroke="#dedede" stroke-width="1.7"><ellipse cx="16" cy="16.3" rx="11.5" ry="5.3"/><ellipse cx="16" cy="16.3" rx="5.5" ry="10.5"/></g><path d="M16 11.5 V15.5 L12.6 18.6 M16 15.5 L19.4 18.6" fill="none" stroke="#dedede" stroke-width="0.9"/></svg><svg style="position:absolute;left:1798px;top:801px;" width="6" height="6" viewBox="0 0 6 6"><path d="M0.5 5.5 L5 5.5 L0.5 1 Z" fill="#eee"/></svg><svg style="position:absolute;left:0;top:0" width="1836" height="814" viewBox="0 0 1836 814"><rect x="1064.1" y="283.0" width="2.2" height="31.7" rx="1" fill="#8d8c86"/><rect x="1064.5" y="283.0" width="0.9" height="30.7" fill="#b5b4ac"/><rect x="1071.5" y="284.6" width="2.2" height="32.9" rx="1" fill="#8d8c86"/><rect x="1071.9" y="284.6" width="0.9" height="31.9" fill="#b5b4ac"/><rect x="1079.0" y="286.1" width="2.2" height="35.6" rx="1" fill="#8d8c86"/><rect x="1079.4" y="286.1" width="0.9" height="34.6" fill="#b5b4ac"/><rect x="1086.4" y="287.7" width="2.2" height="33.4" rx="1" fill="#8d8c86"/><rect x="1086.8" y="287.7" width="0.9" height="32.4" fill="#b5b4ac"/><rect x="1093.8" y="289.3" width="2.2" height="34.2" rx="1" fill="#8d8c86"/><rect x="1094.2" y="289.3" width="0.9" height="33.2" fill="#b5b4ac"/><rect x="1101.3" y="290.8" width="2.2" height="35.2" rx="1" fill="#8d8c86"/><rect x="1101.7" y="290.8" width="0.9" height="34.2" fill="#b5b4ac"/><rect x="1108.7" y="292.4" width="2.2" height="33.3" rx="1" fill="#8d8c86"/><rect x="1109.1" y="292.4" width="0.9" height="32.3" fill="#b5b4ac"/><rect x="1116.2" y="293.9" width="2.2" height="35.8" rx="1" fill="#8d8c86"/><rect x="1116.6" y="293.9" width="0.9" height="34.8" fill="#b5b4ac"/><rect x="1123.6" y="295.5" width="2.2" height="37.1" rx="1" fill="#8d8c86"/><rect x="1124.0" y="295.5" width="0.9" height="36.1" fill="#b5b4ac"/><rect x="1131.0" y="297.1" width="2.2" height="38.6" rx="1" fill="#8d8c86"/><rect x="1131.4" y="297.1" width="0.9" height="37.6" fill="#b5b4ac"/><rect x="1138.5" y="298.6" width="2.2" height="34.9" rx="1" fill="#8d8c86"/><rect x="1138.9" y="298.6" width="0.9" height="33.9" fill="#b5b4ac"/><rect x="1145.9" y="300.2" width="2.2" height="36.7" rx="1" fill="#8d8c86"/><rect x="1146.3" y="300.2" width="0.9" height="35.7" fill="#b5b4ac"/><rect x="1153.3" y="301.8" width="2.2" height="36.0" rx="1" fill="#8d8c86"/><rect x="1153.7" y="301.8" width="0.9" height="35.0" fill="#b5b4ac"/><rect x="1160.8" y="303.3" width="2.2" height="40.9" rx="1" fill="#8d8c86"/><rect x="1161.2" y="303.3" width="0.9" height="39.9" fill="#b5b4ac"/><rect x="1168.2" y="304.9" width="2.2" height="40.7" rx="1" fill="#8d8c86"/><rect x="1168.6" y="304.9" width="0.9" height="39.7" fill="#b5b4ac"/><rect x="1175.6" y="306.5" width="2.2" height="37.3" rx="1" fill="#8d8c86"/><rect x="1176.0" y="306.5" width="0.9" height="36.3" fill="#b5b4ac"/><rect x="1183.1" y="308.0" width="2.2" height="43.5" rx="1" fill="#8d8c86"/><rect x="1183.5" y="308.0" width="0.9" height="42.5" fill="#b5b4ac"/><rect x="1190.5" y="309.6" width="2.2" height="43.9" rx="1" fill="#8d8c86"/><rect x="1190.9" y="309.6" width="0.9" height="42.9" fill="#b5b4ac"/><rect x="1197.9" y="311.2" width="2.2" height="42.6" rx="1" fill="#8d8c86"/><rect x="1198.3" y="311.2" width="0.9" height="41.6" fill="#b5b4ac"/><rect x="1205.4" y="312.7" width="2.2" height="42.9" rx="1" fill="#8d8c86"/><rect x="1205.8" y="312.7" width="0.9" height="41.9" fill="#b5b4ac"/><rect x="1212.8" y="314.3" width="2.2" height="40.7" rx="1" fill="#8d8c86"/><rect x="1213.2" y="314.3" width="0.9" height="39.7" fill="#b5b4ac"/><rect x="1220.3" y="315.8" width="2.2" height="40.4" rx="1" fill="#8d8c86"/><rect x="1220.7" y="315.8" width="0.9" height="39.4" fill="#b5b4ac"/><rect x="1227.7" y="317.4" width="2.2" height="44.0" rx="1" fill="#8d8c86"/><rect x="1228.1" y="317.4" width="0.9" height="43.0" fill="#b5b4ac"/><rect x="1235.1" y="319.0" width="2.2" height="41.7" rx="1" fill="#8d8c86"/><rect x="1235.5" y="319.0" width="0.9" height="40.7" fill="#b5b4ac"/><rect x="1242.6" y="320.5" width="2.2" height="43.1" rx="1" fill="#8d8c86"/><rect x="1243.0" y="320.5" width="0.9" height="42.1" fill="#b5b4ac"/><rect x="1250.0" y="322.1" width="2.2" height="43.9" rx="1" fill="#8d8c86"/><rect x="1250.4" y="322.1" width="0.9" height="42.9" fill="#b5b4ac"/><rect x="1257.4" y="323.7" width="2.2" height="43.2" rx="1" fill="#8d8c86"/><rect x="1257.8" y="323.7" width="0.9" height="42.2" fill="#b5b4ac"/><rect x="1264.9" y="325.2" width="2.2" height="46.3" rx="1" fill="#8d8c86"/><rect x="1265.3" y="325.2" width="0.9" height="45.3" fill="#b5b4ac"/><rect x="1272.3" y="326.8" width="2.2" height="46.7" rx="1" fill="#8d8c86"/><rect x="1272.7" y="326.8" width="0.9" height="45.7" fill="#b5b4ac"/><rect x="1279.7" y="328.4" width="2.2" height="49.7" rx="1" fill="#8d8c86"/><rect x="1280.1" y="328.4" width="0.9" height="48.7" fill="#b5b4ac"/><rect x="1287.2" y="329.9" width="2.2" height="48.3" rx="1" fill="#8d8c86"/><rect x="1287.6" y="329.9" width="0.9" height="47.3" fill="#b5b4ac"/><rect x="1294.6" y="331.5" width="2.2" height="49.5" rx="1" fill="#8d8c86"/><rect x="1295.0" y="331.5" width="0.9" height="48.5" fill="#b5b4ac"/><rect x="1302.0" y="333.1" width="2.2" height="49.2" rx="1" fill="#8d8c86"/><rect x="1302.4" y="333.1" width="0.9" height="48.2" fill="#b5b4ac"/><rect x="1309.5" y="334.6" width="2.2" height="50.7" rx="1" fill="#8d8c86"/><rect x="1309.9" y="334.6" width="0.9" height="49.7" fill="#b5b4ac"/><rect x="1316.9" y="336.2" width="2.2" height="50.1" rx="1" fill="#8d8c86"/><rect x="1317.3" y="336.2" width="0.9" height="49.1" fill="#b5b4ac"/><rect x="1324.4" y="337.7" width="2.2" height="49.5" rx="1" fill="#8d8c86"/><rect x="1324.8" y="337.7" width="0.9" height="48.5" fill="#b5b4ac"/><rect x="1331.8" y="339.3" width="2.2" height="54.4" rx="1" fill="#8d8c86"/><rect x="1332.2" y="339.3" width="0.9" height="53.4" fill="#b5b4ac"/><rect x="1339.2" y="340.9" width="2.2" height="54.9" rx="1" fill="#8d8c86"/><rect x="1339.6" y="340.9" width="0.9" height="53.9" fill="#b5b4ac"/><rect x="1346.7" y="342.4" width="2.2" height="54.5" rx="1" fill="#8d8c86"/><rect x="1347.1" y="342.4" width="0.9" height="53.5" fill="#b5b4ac"/><rect x="1354.1" y="344.0" width="2.2" height="54.2" rx="1" fill="#8d8c86"/><rect x="1354.5" y="344.0" width="0.9" height="53.2" fill="#b5b4ac"/><rect x="1361.9" y="342.0" width="2.2" height="53.9" rx="1" fill="#8d8c86"/><rect x="1362.3" y="342.0" width="0.9" height="52.9" fill="#b5b4ac"/><rect x="1369.2" y="338.8" width="2.2" height="51.9" rx="1" fill="#8d8c86"/><rect x="1369.6" y="338.8" width="0.9" height="50.9" fill="#b5b4ac"/><rect x="1376.5" y="335.7" width="2.2" height="50.8" rx="1" fill="#8d8c86"/><rect x="1376.9" y="335.7" width="0.9" height="49.8" fill="#b5b4ac"/><rect x="1383.8" y="332.5" width="2.2" height="48.0" rx="1" fill="#8d8c86"/><rect x="1384.2" y="332.5" width="0.9" height="47.0" fill="#b5b4ac"/><rect x="1391.1" y="329.4" width="2.2" height="50.8" rx="1" fill="#8d8c86"/><rect x="1391.5" y="329.4" width="0.9" height="49.8" fill="#b5b4ac"/><rect x="1398.4" y="326.2" width="2.2" height="47.1" rx="1" fill="#8d8c86"/><rect x="1398.8" y="326.2" width="0.9" height="46.1" fill="#b5b4ac"/><rect x="1405.7" y="323.1" width="2.2" height="48.3" rx="1" fill="#8d8c86"/><rect x="1406.1" y="323.1" width="0.9" height="47.3" fill="#b5b4ac"/><rect x="1413.1" y="319.9" width="2.2" height="44.1" rx="1" fill="#8d8c86"/><rect x="1413.5" y="319.9" width="0.9" height="43.1" fill="#b5b4ac"/><rect x="1420.4" y="316.8" width="2.2" height="46.1" rx="1" fill="#8d8c86"/><rect x="1420.8" y="316.8" width="0.9" height="45.1" fill="#b5b4ac"/><rect x="1427.7" y="313.6" width="2.2" height="43.9" rx="1" fill="#8d8c86"/><rect x="1428.1" y="313.6" width="0.9" height="42.9" fill="#b5b4ac"/><rect x="1435.0" y="310.5" width="2.2" height="37.4" rx="1" fill="#8d8c86"/><rect x="1435.4" y="310.5" width="0.9" height="36.4" fill="#b5b4ac"/><rect x="1442.3" y="307.3" width="2.2" height="37.2" rx="1" fill="#8d8c86"/><rect x="1442.7" y="307.3" width="0.9" height="36.2" fill="#b5b4ac"/><rect x="1449.6" y="304.2" width="2.2" height="39.9" rx="1" fill="#8d8c86"/><rect x="1450.0" y="304.2" width="0.9" height="38.9" fill="#b5b4ac"/><rect x="1456.9" y="301.0" width="2.2" height="35.8" rx="1" fill="#8d8c86"/><rect x="1457.3" y="301.0" width="0.9" height="34.8" fill="#b5b4ac"/><rect x="1058.6" y="288.0" width="2.8" height="34.9" rx="1" fill="#c9c8bf"/><rect x="1059.0" y="288.0" width="1.1" height="33.9" fill="#efeee6"/><rect x="1066.4" y="289.6" width="2.8" height="32.1" rx="1" fill="#c9c8bf"/><rect x="1066.8" y="289.6" width="1.1" height="31.1" fill="#efeee6"/><rect x="1074.3" y="291.3" width="2.8" height="30.9" rx="1" fill="#c9c8bf"/><rect x="1074.7" y="291.3" width="1.1" height="29.9" fill="#efeee6"/><rect x="1082.1" y="292.9" width="2.8" height="35.0" rx="1" fill="#c9c8bf"/><rect x="1082.5" y="292.9" width="1.1" height="34.0" fill="#efeee6"/><rect x="1090.0" y="294.6" width="2.8" height="36.6" rx="1" fill="#c9c8bf"/><rect x="1090.4" y="294.6" width="1.1" height="35.6" fill="#efeee6"/><rect x="1097.8" y="296.2" width="2.8" height="34.3" rx="1" fill="#c9c8bf"/><rect x="1098.2" y="296.2" width="1.1" height="33.3" fill="#efeee6"/><rect x="1105.6" y="297.9" width="2.8" height="33.9" rx="1" fill="#c9c8bf"/><rect x="1106.0" y="297.9" width="1.1" height="32.9" fill="#efeee6"/><rect x="1113.5" y="299.5" width="2.8" height="36.1" rx="1" fill="#c9c8bf"/><rect x="1113.9" y="299.5" width="1.1" height="35.1" fill="#efeee6"/><rect x="1121.3" y="301.2" width="2.8" height="40.6" rx="1" fill="#c9c8bf"/><rect x="1121.7" y="301.2" width="1.1" height="39.6" fill="#efeee6"/><rect x="1129.1" y="302.8" width="2.8" height="40.1" rx="1" fill="#c9c8bf"/><rect x="1129.5" y="302.8" width="1.1" height="39.1" fill="#efeee6"/><rect x="1137.0" y="304.5" width="2.8" height="37.0" rx="1" fill="#c9c8bf"/><rect x="1137.4" y="304.5" width="1.1" height="36.0" fill="#efeee6"/><rect x="1144.8" y="306.1" width="2.8" height="38.5" rx="1" fill="#c9c8bf"/><rect x="1145.2" y="306.1" width="1.1" height="37.5" fill="#efeee6"/><rect x="1152.7" y="307.8" width="2.8" height="38.4" rx="1" fill="#c9c8bf"/><rect x="1153.1" y="307.8" width="1.1" height="37.4" fill="#efeee6"/><rect x="1160.5" y="309.4" width="2.8" height="38.8" rx="1" fill="#c9c8bf"/><rect x="1160.9" y="309.4" width="1.1" height="37.8" fill="#efeee6"/><rect x="1168.3" y="311.1" width="2.8" height="44.0" rx="1" fill="#c9c8bf"/><rect x="1168.7" y="311.1" width="1.1" height="43.0" fill="#efeee6"/><rect x="1176.2" y="312.7" width="2.8" height="41.0" rx="1" fill="#c9c8bf"/><rect x="1176.6" y="312.7" width="1.1" height="40.0" fill="#efeee6"/><rect x="1184.0" y="314.4" width="2.8" height="44.0" rx="1" fill="#c9c8bf"/><rect x="1184.4" y="314.4" width="1.1" height="43.0" fill="#efeee6"/><rect x="1191.8" y="316.0" width="2.8" height="44.1" rx="1" fill="#c9c8bf"/><rect x="1192.2" y="316.0" width="1.1" height="43.1" fill="#efeee6"/><rect x="1199.7" y="317.7" width="2.8" height="43.3" rx="1" fill="#c9c8bf"/><rect x="1200.1" y="317.7" width="1.1" height="42.3" fill="#efeee6"/><rect x="1207.5" y="319.3" width="2.8" height="47.3" rx="1" fill="#c9c8bf"/><rect x="1207.9" y="319.3" width="1.1" height="46.3" fill="#efeee6"/><rect x="1215.4" y="321.0" width="2.8" height="44.4" rx="1" fill="#c9c8bf"/><rect x="1215.8" y="321.0" width="1.1" height="43.4" fill="#efeee6"/><rect x="1223.2" y="322.6" width="2.8" height="48.2" rx="1" fill="#c9c8bf"/><rect x="1223.6" y="322.6" width="1.1" height="47.2" fill="#efeee6"/><rect x="1231.0" y="324.3" width="2.8" height="45.8" rx="1" fill="#c9c8bf"/><rect x="1231.4" y="324.3" width="1.1" height="44.8" fill="#efeee6"/><rect x="1238.9" y="325.9" width="2.8" height="48.3" rx="1" fill="#c9c8bf"/><rect x="1239.3" y="325.9" width="1.1" height="47.3" fill="#efeee6"/><rect x="1246.7" y="327.6" width="2.8" height="47.8" rx="1" fill="#c9c8bf"/><rect x="1247.1" y="327.6" width="1.1" height="46.8" fill="#efeee6"/><rect x="1254.5" y="329.2" width="2.8" height="48.9" rx="1" fill="#c9c8bf"/><rect x="1254.9" y="329.2" width="1.1" height="47.9" fill="#efeee6"/><rect x="1262.4" y="330.9" width="2.8" height="53.8" rx="1" fill="#c9c8bf"/><rect x="1262.8" y="330.9" width="1.1" height="52.8" fill="#efeee6"/><rect x="1270.2" y="332.5" width="2.8" height="53.5" rx="1" fill="#c9c8bf"/><rect x="1270.6" y="332.5" width="1.1" height="52.5" fill="#efeee6"/><rect x="1278.1" y="334.2" width="2.8" height="51.3" rx="1" fill="#c9c8bf"/><rect x="1278.5" y="334.2" width="1.1" height="50.3" fill="#efeee6"/><rect x="1285.9" y="335.8" width="2.8" height="55.5" rx="1" fill="#c9c8bf"/><rect x="1286.3" y="335.8" width="1.1" height="54.5" fill="#efeee6"/><rect x="1293.7" y="337.5" width="2.8" height="52.2" rx="1" fill="#c9c8bf"/><rect x="1294.1" y="337.5" width="1.1" height="51.2" fill="#efeee6"/><rect x="1301.6" y="339.1" width="2.8" height="54.0" rx="1" fill="#c9c8bf"/><rect x="1302.0" y="339.1" width="1.1" height="53.0" fill="#efeee6"/><rect x="1309.4" y="340.8" width="2.8" height="57.5" rx="1" fill="#c9c8bf"/><rect x="1309.8" y="340.8" width="1.1" height="56.5" fill="#efeee6"/><rect x="1317.2" y="342.4" width="2.8" height="56.9" rx="1" fill="#c9c8bf"/><rect x="1317.6" y="342.4" width="1.1" height="55.9" fill="#efeee6"/><rect x="1325.1" y="344.1" width="2.8" height="54.4" rx="1" fill="#c9c8bf"/><rect x="1325.5" y="344.1" width="1.1" height="53.4" fill="#efeee6"/><rect x="1332.9" y="345.7" width="2.8" height="60.5" rx="1" fill="#c9c8bf"/><rect x="1333.3" y="345.7" width="1.1" height="59.5" fill="#efeee6"/><rect x="1340.8" y="347.4" width="2.8" height="56.5" rx="1" fill="#c9c8bf"/><rect x="1341.2" y="347.4" width="1.1" height="55.5" fill="#efeee6"/><rect x="1348.6" y="349.0" width="2.8" height="57.5" rx="1" fill="#c9c8bf"/><rect x="1349.0" y="349.0" width="1.1" height="56.5" fill="#efeee6"/><rect x="1356.6" y="349.0" width="2.8" height="62.6" rx="1" fill="#c9c8bf"/><rect x="1357.0" y="349.0" width="1.1" height="61.6" fill="#efeee6"/><rect x="1364.8" y="345.4" width="2.8" height="58.1" rx="1" fill="#c9c8bf"/><rect x="1365.2" y="345.4" width="1.1" height="57.1" fill="#efeee6"/><rect x="1372.9" y="341.8" width="2.8" height="56.1" rx="1" fill="#c9c8bf"/><rect x="1373.3" y="341.8" width="1.1" height="55.1" fill="#efeee6"/><rect x="1381.1" y="338.2" width="2.8" height="52.9" rx="1" fill="#c9c8bf"/><rect x="1381.5" y="338.2" width="1.1" height="51.9" fill="#efeee6"/><rect x="1389.3" y="334.7" width="2.8" height="51.2" rx="1" fill="#c9c8bf"/><rect x="1389.7" y="334.7" width="1.1" height="50.2" fill="#efeee6"/><rect x="1397.4" y="331.1" width="2.8" height="52.3" rx="1" fill="#c9c8bf"/><rect x="1397.8" y="331.1" width="1.1" height="51.3" fill="#efeee6"/><rect x="1405.6" y="327.5" width="2.8" height="48.5" rx="1" fill="#c9c8bf"/><rect x="1406.0" y="327.5" width="1.1" height="47.5" fill="#efeee6"/><rect x="1413.8" y="323.9" width="2.8" height="48.8" rx="1" fill="#c9c8bf"/><rect x="1414.2" y="323.9" width="1.1" height="47.8" fill="#efeee6"/><rect x="1421.9" y="320.3" width="2.8" height="45.6" rx="1" fill="#c9c8bf"/><rect x="1422.3" y="320.3" width="1.1" height="44.6" fill="#efeee6"/><rect x="1430.1" y="316.8" width="2.8" height="44.2" rx="1" fill="#c9c8bf"/><rect x="1430.5" y="316.8" width="1.1" height="43.2" fill="#efeee6"/><rect x="1438.3" y="313.2" width="2.8" height="45.4" rx="1" fill="#c9c8bf"/><rect x="1438.7" y="313.2" width="1.1" height="44.4" fill="#efeee6"/><rect x="1446.4" y="309.6" width="2.8" height="40.7" rx="1" fill="#c9c8bf"/><rect x="1446.8" y="309.6" width="1.1" height="39.7" fill="#efeee6"/><rect x="1454.6" y="306.0" width="2.8" height="39.4" rx="1" fill="#c9c8bf"/><rect x="1455.0" y="306.0" width="1.1" height="38.4" fill="#efeee6"/><rect x="1482.8" y="290.0" width="2.4" height="52.0" rx="1" fill="#c9c8bf"/><rect x="1483.2" y="290.0" width="1.0" height="51.0" fill="#efeee6"/><rect x="1488.6" y="288.0" width="2.4" height="50.7" rx="1" fill="#c9c8bf"/><rect x="1489.0" y="288.0" width="1.0" height="49.7" fill="#efeee6"/><rect x="1494.5" y="286.0" width="2.4" height="49.3" rx="1" fill="#c9c8bf"/><rect x="1494.9" y="286.0" width="1.0" height="48.3" fill="#efeee6"/><rect x="1500.3" y="284.0" width="2.4" height="48.0" rx="1" fill="#c9c8bf"/><rect x="1500.7" y="284.0" width="1.0" height="47.0" fill="#efeee6"/><rect x="1506.1" y="282.0" width="2.4" height="46.7" rx="1" fill="#c9c8bf"/><rect x="1506.5" y="282.0" width="1.0" height="45.7" fill="#efeee6"/><rect x="1512.0" y="280.0" width="2.4" height="45.3" rx="1" fill="#c9c8bf"/><rect x="1512.4" y="280.0" width="1.0" height="44.3" fill="#efeee6"/><rect x="1517.8" y="278.0" width="2.4" height="44.0" rx="1" fill="#c9c8bf"/><rect x="1518.2" y="278.0" width="1.0" height="43.0" fill="#efeee6"/><rect x="1463.8" y="290.0" width="2.4" height="45.0" rx="1" fill="#c9c8bf"/><rect x="1464.2" y="290.0" width="1.0" height="44.0" fill="#efeee6"/><rect x="1470.8" y="290.0" width="2.4" height="45.0" rx="1" fill="#c9c8bf"/><rect x="1471.2" y="290.0" width="1.0" height="44.0" fill="#efeee6"/><polygon points="1474.6,271.0 1521.0,260.0 1521.0,281.0 1485.6,294.0 1474.6,295.0" fill="#3b3e41"/><rect x="1462" y="276" width="13" height="18" fill="#dddbd0"/><polygon points="1398.4,102.0 1441.0,126.0 1497.7,155.8 1513.0,162.3 1513.0,186.0 1521.0,190.6 1521.0,262.0 1398.4,292.0" fill="#ec845a"/><rect x="1442.0" y="131.5" width="2.4" height="141.8" fill="#2c2f32"/><rect x="1445.0" y="133.1" width="2.4" height="139.5" fill="#2c2f32"/><rect x="1448.0" y="134.7" width="2.4" height="137.2" fill="#2c2f32"/><rect x="1451.0" y="136.3" width="2.4" height="134.9" fill="#2c2f32"/><rect x="1454.0" y="137.8" width="2.4" height="132.6" fill="#2c2f32"/><rect x="1457.0" y="139.4" width="2.4" height="130.3" fill="#2c2f32"/><rect x="1460.0" y="141.0" width="2.4" height="127.9" fill="#2c2f32"/><rect x="1463.0" y="142.6" width="2.4" height="125.6" fill="#2c2f32"/><rect x="1466.0" y="144.1" width="2.4" height="123.3" fill="#2c2f32"/><rect x="1469.0" y="145.7" width="2.4" height="121.0" fill="#2c2f32"/><rect x="1472.0" y="147.3" width="2.4" height="118.7" fill="#2c2f32"/><rect x="1475.0" y="148.9" width="2.4" height="116.4" fill="#2c2f32"/><rect x="1478.0" y="150.4" width="2.4" height="114.1" fill="#2c2f32"/><rect x="1481.0" y="152.0" width="2.4" height="111.8" fill="#2c2f32"/><rect x="1484.0" y="153.6" width="2.4" height="109.5" fill="#2c2f32"/><rect x="1487.0" y="155.2" width="2.4" height="107.1" fill="#2c2f32"/><rect x="1490.0" y="156.8" width="2.4" height="104.8" fill="#2c2f32"/><rect x="1493.0" y="158.3" width="2.4" height="102.5" fill="#2c2f32"/><rect x="1496.0" y="159.9" width="2.4" height="100.2" fill="#2c2f32"/><path d="M1441 182.0 L1498 194.0" stroke="#3a2418" stroke-width="0.9" opacity="0.8"/><path d="M1441 222.0 L1498 234.0" stroke="#3a2418" stroke-width="0.9" opacity="0.8"/><rect x="1500.0" y="175.0" width="2" height="80.0" fill="#2c2f32"/><rect x="1503.4" y="175.8" width="2" height="78.0" fill="#2c2f32"/><rect x="1506.8" y="176.6" width="2" height="76.0" fill="#2c2f32"/><rect x="1510.2" y="177.4" width="2" height="74.0" fill="#2c2f32"/><rect x="1513.6" y="178.2" width="2" height="72.0" fill="#2c2f32"/><rect x="1402.0" y="124.0" width="8" height="42" fill="#2f3235"/><rect x="1414.2" y="131.0" width="8" height="42" fill="#2f3235"/><rect x="1426.4" y="138.0" width="8" height="42" fill="#2f3235"/><rect x="1402.0" y="172.0" width="8" height="30" fill="#2f3235"/><rect x="1414.2" y="179.0" width="8" height="30" fill="#2f3235"/><rect x="1426.4" y="186.0" width="8" height="30" fill="#2f3235"/><rect x="1402.0" y="212.0" width="8" height="34" fill="#2f3235"/><rect x="1414.2" y="219.0" width="8" height="34" fill="#2f3235"/><rect x="1426.4" y="226.0" width="8" height="34" fill="#2f3235"/><path d="M1398.4 102 V292" stroke="#5a2a18" stroke-width="1"/><path d="M1441 126 V270" stroke="#5a2a18" stroke-width="0.9"/><polygon points="1056.0,258.0 1114.6,173.0 1264.0,151.8 1264.0,126.1 1395.8,101.6 1398.4,102.0 1398.4,292.0 1056.0,270.0" fill="#d96f45"/><polygon points="1357.0,110.0 1398.4,102.0 1398.4,292.0 1357.0,288.0" fill="#e98459"/><path d="M1264 139 L1398 114 M1264 151.8 L1357 134 M1264 165 L1357 148" stroke="#6a3520" stroke-width="0.8"/><rect x="1118.0" y="173.5" width="8.5" height="14" fill="#2f3235"/><rect x="1118.0" y="187.5" width="8.5" height="20" fill="#1c1d1e"/><rect x="1120.0" y="191.0" width="4.5" height="14" fill="#9d8f8e"/><rect x="1121.5" y="190.5" width="1.6" height="15" fill="#1c1d1e"/><rect x="1120.0" y="191.0" width="4.5" height="1.5" fill="#c9c4c4"/><rect x="1118.0" y="215.5" width="8.5" height="25" fill="#1c1d1e"/><rect x="1120.0" y="219.0" width="4.5" height="19" fill="#9d8f8e"/><rect x="1121.5" y="218.5" width="1.6" height="20" fill="#1c1d1e"/><rect x="1120.0" y="219.0" width="4.5" height="1.5" fill="#c9c4c4"/><rect x="1118.0" y="249.5" width="8.5" height="17" fill="#1c1d1e"/><rect x="1120.0" y="253.0" width="4.5" height="11" fill="#9d8f8e"/><rect x="1121.5" y="252.5" width="1.6" height="12" fill="#1c1d1e"/><rect x="1120.0" y="253.0" width="4.5" height="1.5" fill="#c9c4c4"/><rect x="1131.3" y="171.6" width="8.5" height="14" fill="#2f3235"/><rect x="1131.3" y="185.6" width="8.5" height="20" fill="#1c1d1e"/><rect x="1133.3" y="189.1" width="4.5" height="14" fill="#9d8f8e"/><rect x="1134.8" y="188.6" width="1.6" height="15" fill="#1c1d1e"/><rect x="1133.3" y="189.1" width="4.5" height="1.5" fill="#c9c4c4"/><rect x="1131.3" y="213.6" width="8.5" height="25" fill="#1c1d1e"/><rect x="1133.3" y="217.1" width="4.5" height="19" fill="#9d8f8e"/><rect x="1134.8" y="216.6" width="1.6" height="20" fill="#1c1d1e"/><rect x="1133.3" y="217.1" width="4.5" height="1.5" fill="#c9c4c4"/><rect x="1131.3" y="247.6" width="8.5" height="17" fill="#1c1d1e"/><rect x="1133.3" y="251.1" width="4.5" height="11" fill="#9d8f8e"/><rect x="1134.8" y="250.6" width="1.6" height="12" fill="#1c1d1e"/><rect x="1133.3" y="251.1" width="4.5" height="1.5" fill="#c9c4c4"/><rect x="1144.6" y="169.7" width="8.5" height="14" fill="#2f3235"/><rect x="1144.6" y="183.7" width="8.5" height="20" fill="#1c1d1e"/><rect x="1146.6" y="187.2" width="4.5" height="14" fill="#9d8f8e"/><rect x="1148.0" y="186.7" width="1.6" height="15" fill="#1c1d1e"/><rect x="1146.6" y="187.2" width="4.5" height="1.5" fill="#c9c4c4"/><rect x="1144.6" y="211.7" width="8.5" height="25" fill="#1c1d1e"/><rect x="1146.6" y="215.2" width="4.5" height="19" fill="#9d8f8e"/><rect x="1148.0" y="214.7" width="1.6" height="20" fill="#1c1d1e"/><rect x="1146.6" y="215.2" width="4.5" height="1.5" fill="#c9c4c4"/><rect x="1144.6" y="245.7" width="8.5" height="17" fill="#1c1d1e"/><rect x="1146.6" y="249.2" width="4.5" height="11" fill="#9d8f8e"/><rect x="1148.0" y="248.7" width="1.6" height="12" fill="#1c1d1e"/><rect x="1146.6" y="249.2" width="4.5" height="1.5" fill="#c9c4c4"/><rect x="1157.9" y="167.9" width="8.5" height="14" fill="#2f3235"/><rect x="1157.9" y="181.9" width="8.5" height="20" fill="#1c1d1e"/><rect x="1159.9" y="185.4" width="4.5" height="14" fill="#9d8f8e"/><rect x="1161.3" y="184.9" width="1.6" height="15" fill="#1c1d1e"/><rect x="1159.9" y="185.4" width="4.5" height="1.5" fill="#c9c4c4"/><rect x="1157.9" y="209.9" width="8.5" height="25" fill="#1c1d1e"/><rect x="1159.9" y="213.4" width="4.5" height="19" fill="#9d8f8e"/><rect x="1161.3" y="212.9" width="1.6" height="20" fill="#1c1d1e"/><rect x="1159.9" y="213.4" width="4.5" height="1.5" fill="#c9c4c4"/><rect x="1157.9" y="243.9" width="8.5" height="17" fill="#1c1d1e"/><rect x="1159.9" y="247.4" width="4.5" height="11" fill="#9d8f8e"/><rect x="1161.3" y="246.9" width="1.6" height="12" fill="#1c1d1e"/><rect x="1159.9" y="247.4" width="4.5" height="1.5" fill="#c9c4c4"/><rect x="1171.2" y="166.0" width="8.5" height="14" fill="#2f3235"/><rect x="1171.2" y="180.0" width="8.5" height="20" fill="#1c1d1e"/><rect x="1173.2" y="183.5" width="4.5" height="14" fill="#9d8f8e"/><rect x="1174.6" y="183.0" width="1.6" height="15" fill="#1c1d1e"/><rect x="1173.2" y="183.5" width="4.5" height="1.5" fill="#c9c4c4"/><rect x="1171.2" y="208.0" width="8.5" height="25" fill="#1c1d1e"/><rect x="1173.2" y="211.5" width="4.5" height="19" fill="#9d8f8e"/><rect x="1174.6" y="211.0" width="1.6" height="20" fill="#1c1d1e"/><rect x="1173.2" y="211.5" width="4.5" height="1.5" fill="#c9c4c4"/><rect x="1171.2" y="242.0" width="8.5" height="17" fill="#1c1d1e"/><rect x="1173.2" y="245.5" width="4.5" height="11" fill="#9d8f8e"/><rect x="1174.6" y="245.0" width="1.6" height="12" fill="#1c1d1e"/><rect x="1173.2" y="245.5" width="4.5" height="1.5" fill="#c9c4c4"/><rect x="1184.5" y="164.1" width="8.5" height="14" fill="#2f3235"/><rect x="1184.5" y="178.1" width="8.5" height="20" fill="#1c1d1e"/><rect x="1186.5" y="181.6" width="4.5" height="14" fill="#9d8f8e"/><rect x="1187.9" y="181.1" width="1.6" height="15" fill="#1c1d1e"/><rect x="1186.5" y="181.6" width="4.5" height="1.5" fill="#c9c4c4"/><rect x="1184.5" y="206.1" width="8.5" height="25" fill="#1c1d1e"/><rect x="1186.5" y="209.6" width="4.5" height="19" fill="#9d8f8e"/><rect x="1187.9" y="209.1" width="1.6" height="20" fill="#1c1d1e"/><rect x="1186.5" y="209.6" width="4.5" height="1.5" fill="#c9c4c4"/><rect x="1184.5" y="240.1" width="8.5" height="17" fill="#1c1d1e"/><rect x="1186.5" y="243.6" width="4.5" height="11" fill="#9d8f8e"/><rect x="1187.9" y="243.1" width="1.6" height="12" fill="#1c1d1e"/><rect x="1186.5" y="243.6" width="4.5" height="1.5" fill="#c9c4c4"/><rect x="1197.8" y="162.2" width="14" height="14" fill="#2f3235"/><rect x="1197.8" y="176.2" width="14" height="20" fill="#1c1d1e"/><rect x="1199.8" y="179.7" width="10.0" height="14" fill="#9d8f8e"/><rect x="1204.0" y="179.2" width="1.6" height="15" fill="#1c1d1e"/><rect x="1199.8" y="179.7" width="10.0" height="1.5" fill="#c9c4c4"/><rect x="1197.8" y="204.2" width="14" height="25" fill="#1c1d1e"/><rect x="1199.8" y="207.7" width="10.0" height="19" fill="#9d8f8e"/><rect x="1204.0" y="207.2" width="1.6" height="20" fill="#1c1d1e"/><rect x="1199.8" y="207.7" width="10.0" height="1.5" fill="#c9c4c4"/><rect x="1197.8" y="238.2" width="14" height="17" fill="#1c1d1e"/><rect x="1199.8" y="241.7" width="10.0" height="11" fill="#9d8f8e"/><rect x="1204.0" y="241.2" width="1.6" height="12" fill="#1c1d1e"/><rect x="1199.8" y="241.7" width="10.0" height="1.5" fill="#c9c4c4"/><rect x="1217.3" y="159.4" width="14" height="14" fill="#2f3235"/><rect x="1217.3" y="173.4" width="14" height="20" fill="#1c1d1e"/><rect x="1219.3" y="176.9" width="10.0" height="14" fill="#9d8f8e"/><rect x="1223.5" y="176.4" width="1.6" height="15" fill="#1c1d1e"/><rect x="1219.3" y="176.9" width="10.0" height="1.5" fill="#c9c4c4"/><rect x="1217.3" y="201.4" width="14" height="25" fill="#1c1d1e"/><rect x="1219.3" y="204.9" width="10.0" height="19" fill="#9d8f8e"/><rect x="1223.5" y="204.4" width="1.6" height="20" fill="#1c1d1e"/><rect x="1219.3" y="204.9" width="10.0" height="1.5" fill="#c9c4c4"/><rect x="1217.3" y="235.4" width="14" height="17" fill="#1c1d1e"/><rect x="1219.3" y="238.9" width="10.0" height="11" fill="#9d8f8e"/><rect x="1223.5" y="238.4" width="1.6" height="12" fill="#1c1d1e"/><rect x="1219.3" y="238.9" width="10.0" height="1.5" fill="#c9c4c4"/><rect x="1236.8" y="156.7" width="14" height="14" fill="#2f3235"/><rect x="1236.8" y="170.7" width="14" height="20" fill="#1c1d1e"/><rect x="1238.8" y="174.2" width="10.0" height="14" fill="#9d8f8e"/><rect x="1243.0" y="173.7" width="1.6" height="15" fill="#1c1d1e"/><rect x="1238.8" y="174.2" width="10.0" height="1.5" fill="#c9c4c4"/><rect x="1236.8" y="198.7" width="14" height="25" fill="#1c1d1e"/><rect x="1238.8" y="202.2" width="10.0" height="19" fill="#9d8f8e"/><rect x="1243.0" y="201.7" width="1.6" height="20" fill="#1c1d1e"/><rect x="1238.8" y="202.2" width="10.0" height="1.5" fill="#c9c4c4"/><rect x="1236.8" y="232.7" width="14" height="17" fill="#1c1d1e"/><rect x="1238.8" y="236.2" width="10.0" height="11" fill="#9d8f8e"/><rect x="1243.0" y="235.7" width="1.6" height="12" fill="#1c1d1e"/><rect x="1238.8" y="236.2" width="10.0" height="1.5" fill="#c9c4c4"/><rect x="1256.3" y="153.9" width="14" height="14" fill="#2f3235"/><rect x="1256.3" y="167.9" width="14" height="20" fill="#1c1d1e"/><rect x="1258.3" y="171.4" width="10.0" height="14" fill="#9d8f8e"/><rect x="1262.5" y="170.9" width="1.6" height="15" fill="#1c1d1e"/><rect x="1258.3" y="171.4" width="10.0" height="1.5" fill="#c9c4c4"/><rect x="1256.3" y="195.9" width="14" height="25" fill="#1c1d1e"/><rect x="1258.3" y="199.4" width="10.0" height="19" fill="#9d8f8e"/><rect x="1262.5" y="198.9" width="1.6" height="20" fill="#1c1d1e"/><rect x="1258.3" y="199.4" width="10.0" height="1.5" fill="#c9c4c4"/><rect x="1256.3" y="229.9" width="14" height="17" fill="#1c1d1e"/><rect x="1258.3" y="233.4" width="10.0" height="11" fill="#9d8f8e"/><rect x="1262.5" y="232.9" width="1.6" height="12" fill="#1c1d1e"/><rect x="1258.3" y="233.4" width="10.0" height="1.5" fill="#c9c4c4"/><polygon points="1056.0,256.0 1114.6,250.0 1114.6,276.0 1056.0,268.0" fill="#26282a"/><rect x="1058.0" y="257.0" width="2.6" height="9" fill="#c8683f"/><rect x="1064.5" y="256.3" width="2.6" height="9" fill="#c8683f"/><rect x="1071.0" y="255.6" width="2.6" height="9" fill="#c8683f"/><rect x="1077.5" y="254.9" width="2.6" height="9" fill="#c8683f"/><rect x="1084.0" y="254.2" width="2.6" height="9" fill="#c8683f"/><rect x="1090.5" y="253.5" width="2.6" height="9" fill="#c8683f"/><rect x="1097.0" y="252.8" width="2.6" height="9" fill="#c8683f"/><rect x="1103.5" y="252.1" width="2.6" height="9" fill="#c8683f"/><rect x="1110.0" y="251.4" width="2.6" height="9" fill="#c8683f"/><polygon points="1056.0,266.0 1080.0,268.0 1098.0,267.0 1098.0,272.0 1056.0,270.0" fill="#444648"/><rect x="1263.0" y="146.1" width="14" height="24" fill="#2f3235"/><rect x="1263.0" y="172.1" width="14" height="28" fill="#1c1d1e"/><rect x="1265.0" y="176.1" width="10" height="21" fill="#b9a9a6"/><rect x="1269.3" y="176.1" width="1.4" height="21" fill="#1c1d1e"/><rect x="1263.0" y="212.1" width="14" height="36" fill="#1c1d1e"/><rect x="1265.0" y="216.1" width="10" height="29" fill="#b9a9a6"/><rect x="1269.3" y="216.1" width="1.4" height="29" fill="#1c1d1e"/><rect x="1263.0" y="252.1" width="14" height="20" fill="#1c1d1e"/><rect x="1265.0" y="256.1" width="10" height="13" fill="#b9a9a6"/><rect x="1269.3" y="256.1" width="1.4" height="13" fill="#1c1d1e"/><rect x="1298.0" y="141.9" width="18" height="24" fill="#2f3235"/><rect x="1298.0" y="167.9" width="18" height="28" fill="#1c1d1e"/><rect x="1300.0" y="171.9" width="14" height="21" fill="#b9a9a6"/><rect x="1306.3" y="171.9" width="1.4" height="21" fill="#1c1d1e"/><rect x="1298.0" y="207.9" width="18" height="36" fill="#1c1d1e"/><rect x="1300.0" y="211.9" width="14" height="29" fill="#b9a9a6"/><rect x="1306.3" y="211.9" width="1.4" height="29" fill="#1c1d1e"/><rect x="1298.0" y="247.9" width="18" height="20" fill="#1c1d1e"/><rect x="1300.0" y="251.9" width="14" height="13" fill="#b9a9a6"/><rect x="1306.3" y="251.9" width="1.4" height="13" fill="#1c1d1e"/><rect x="1325.0" y="138.7" width="10" height="24" fill="#2f3235"/><rect x="1325.0" y="164.7" width="10" height="28" fill="#1c1d1e"/><rect x="1327.0" y="168.7" width="6" height="21" fill="#b9a9a6"/><rect x="1329.3" y="168.7" width="1.4" height="21" fill="#1c1d1e"/><rect x="1325.0" y="204.7" width="10" height="36" fill="#1c1d1e"/><rect x="1327.0" y="208.7" width="6" height="29" fill="#b9a9a6"/><rect x="1329.3" y="208.7" width="1.4" height="29" fill="#1c1d1e"/><rect x="1325.0" y="244.7" width="10" height="20" fill="#1c1d1e"/><rect x="1327.0" y="248.7" width="6" height="13" fill="#b9a9a6"/><rect x="1329.3" y="248.7" width="1.4" height="13" fill="#1c1d1e"/><polygon points="1055.5,267.6 1354.0,308.5 1354.0,352.7 1055.5,290.8" fill="#323537"/><polygon points="1354.0,308.5 1459.0,279.8 1459.0,308.5 1354.0,352.7" fill="#3c3f42"/><line x1="1354.0" y1="314.8" x2="1459.0" y2="283.9" stroke="#505356" stroke-width="0.6"/><line x1="1354.0" y1="321.1" x2="1459.0" y2="288.0" stroke="#505356" stroke-width="0.6"/><line x1="1354.0" y1="327.4" x2="1459.0" y2="292.1" stroke="#505356" stroke-width="0.6"/><line x1="1354.0" y1="333.8" x2="1459.0" y2="296.2" stroke="#505356" stroke-width="0.6"/><line x1="1354.0" y1="340.1" x2="1459.0" y2="300.3" stroke="#505356" stroke-width="0.6"/><line x1="1354.0" y1="346.4" x2="1459.0" y2="304.4" stroke="#505356" stroke-width="0.6"/><line x1="1055.5" y1="272.2" x2="1354.0" y2="317.3" stroke="#34373a" stroke-width="0.6"/><line x1="1055.5" y1="276.9" x2="1354.0" y2="326.2" stroke="#34373a" stroke-width="0.6"/><line x1="1055.5" y1="281.5" x2="1354.0" y2="335.0" stroke="#34373a" stroke-width="0.6"/><line x1="1055.5" y1="286.2" x2="1354.0" y2="343.9" stroke="#34373a" stroke-width="0.6"/><path d="M1354 308.5 V352.7" stroke="#1a1b1c" stroke-width="1.2"/><path d="M1388 316 L1402 300 L1422 296 L1408 318 Z" fill="#6a6c6e"/><rect x="1220" y="299" width="4" height="4" rx="1" fill="#111"/><rect x="1270" y="306" width="4" height="4" rx="1" fill="#111"/><rect x="1317" y="314" width="4" height="4" rx="1" fill="#111"/><rect x="1376" y="313" width="4" height="4" rx="1" fill="#111"/><rect x="1430" y="296" width="4" height="4" rx="1" fill="#111"/><path d="M1114 208 L1398 205 L1521 217" fill="none" stroke="#a9a9a2" stroke-width="5.6"/><path d="M1114 207.5 L1398 204.5 L1521 216.5" fill="none" stroke="#f5f5ee" stroke-width="3.6"/><path d="M1114 246 L1394 254 L1521 238" fill="none" stroke="#a9a9a2" stroke-width="5.6"/><path d="M1114 245.5 L1394 253.5 L1521 237.5" fill="none" stroke="#f5f5ee" stroke-width="3.6"/><polyline points="1067.0,276.0 1130.0,273.0 1277.0,260.0 1400.0,252.0" fill="none" stroke="#fdf67c" stroke-width="2.16"/><polyline points="1067.0,283.0 1309.0,291.0 1356.0,305.0 1425.0,300.0" fill="none" stroke="#fdf67c" stroke-width="1.92"/><polyline points="1100.0,262.0 1332.0,260.0 1420.0,262.0" fill="none" stroke="#fdf67c" stroke-width="1.92"/><polyline points="1116.0,242.0 1390.0,250.0" fill="none" stroke="#fdf67c" stroke-width="1.44"/><polyline points="1142.0,193.0 1236.0,197.0 1282.0,200.0" fill="none" stroke="#fdf67c" stroke-width="1.80"/><polyline points="1279.5,185.5 1346.0,183.0 1346.0,202.0" fill="none" stroke="#fdf67c" stroke-width="1.92"/><polyline points="1279.5,185.5 1279.5,205.0" fill="none" stroke="#fdf67c" stroke-width="1.68"/><polyline points="1356.0,179.6 1411.0,177.3 1411.0,222.0" fill="none" stroke="#fdf67c" stroke-width="1.92"/><polyline points="1378.7,179.0 1378.7,219.0" fill="none" stroke="#fdf67c" stroke-width="1.56"/><polyline points="1386.5,179.0 1386.5,219.0" fill="none" stroke="#fdf67c" stroke-width="1.56"/><polyline points="1394.4,179.0 1394.4,219.0" fill="none" stroke="#fdf67c" stroke-width="1.56"/><polyline points="1402.3,179.0 1402.3,219.0" fill="none" stroke="#fdf67c" stroke-width="1.56"/><polyline points="1110.0,226.0 1200.0,224.0 1215.0,238.0 1290.0,236.0" fill="none" stroke="#fdf67c" stroke-width="1.56"/><polyline points="1260.0,215.0 1340.0,214.0 1342.0,260.0" fill="none" stroke="#fdf67c" stroke-width="1.56"/><polyline points="1400.0,224.0 1468.0,226.0 1470.0,268.0 1521.0,262.0" fill="none" stroke="#fdf67c" stroke-width="1.68"/><polyline points="1420.0,248.0 1500.0,250.0" fill="none" stroke="#fdf67c" stroke-width="1.44"/><polyline points="1440.0,268.0 1505.0,285.0" fill="none" stroke="#fdf67c" stroke-width="1.44"/><polyline points="1236.0,306.0 1244.0,303.0 1250.0,305.0 1258.0,301.0 1266.0,300.0" fill="none" stroke="#fdf67c" stroke-width="1.80"/><polyline points="1300.0,200.0 1300.0,300.0" fill="none" stroke="#fdf67c" stroke-width="1.80"/><polyline points="1320.0,230.0 1320.0,300.0" fill="none" stroke="#fdf67c" stroke-width="1.56"/><polyline points="1358.0,240.0 1358.0,300.0" fill="none" stroke="#fdf67c" stroke-width="1.80"/><polyline points="1208.0,190.0 1208.0,255.0" fill="none" stroke="#fdf67c" stroke-width="1.68"/><polyline points="1150.0,192.0 1150.0,262.0" fill="none" stroke="#fdf67c" stroke-width="1.56"/><polyline points="1128.0,226.0 1128.0,280.0" fill="none" stroke="#fdf67c" stroke-width="1.56"/><polyline points="1164.0,205.0 1164.0,270.0" fill="none" stroke="#fdf67c" stroke-width="1.44"/><polyline points="1185.0,215.0 1185.0,265.0" fill="none" stroke="#fdf67c" stroke-width="1.44"/><polyline points="1232.0,200.0 1232.0,268.0" fill="none" stroke="#fdf67c" stroke-width="1.44"/><polyline points="1263.0,190.0 1263.0,250.0" fill="none" stroke="#fdf67c" stroke-width="1.44"/><polyline points="1432.0,205.0 1432.0,272.0" fill="none" stroke="#fdf67c" stroke-width="1.44"/><polyline points="1455.0,210.0 1455.0,262.0" fill="none" stroke="#fdf67c" stroke-width="1.44"/><polyline points="1067.0,276.0 1067.0,297.0 1056.0,299.0" fill="none" stroke="#fdf67c" stroke-width="1.80"/><polyline points="1067.0,276.0 1078.0,276.0 1078.0,284.0 1067.0,284.0" fill="none" stroke="#fdf67c" stroke-width="1.44"/><polyline points="1419.9,209.4 1419.9,226.1" fill="none" stroke="#fdf67c" stroke-width="1.32"/><polyline points="1401.7,217.2 1401.7,231.5" fill="none" stroke="#fdf67c" stroke-width="1.32"/><polyline points="1447.7,211.0 1467.5,211.3" fill="none" stroke="#fdf67c" stroke-width="1.32"/><polyline points="1253.0,200.1 1253.0,217.6" fill="none" stroke="#fdf67c" stroke-width="1.32"/><polyline points="1184.4,270.4 1184.4,286.0" fill="none" stroke="#fdf67c" stroke-width="1.32"/><polyline points="1318.7,222.3 1318.7,236.4" fill="none" stroke="#fdf67c" stroke-width="1.32"/><polyline points="1120.8,214.7 1140.1,215.1" fill="none" stroke="#fdf67c" stroke-width="1.32"/><polyline points="1200.1,295.3 1200.1,299.6" fill="none" stroke="#fdf67c" stroke-width="1.32"/><polyline points="1195.9,240.1 1195.9,246.6" fill="none" stroke="#fdf67c" stroke-width="1.32"/><polyline points="1233.3,254.9 1233.3,264.0" fill="none" stroke="#fdf67c" stroke-width="1.32"/><polyline points="1429.1,302.7 1445.5,303.0" fill="none" stroke="#fdf67c" stroke-width="1.32"/><polyline points="1147.6,192.1 1147.6,208.8" fill="none" stroke="#fdf67c" stroke-width="1.32"/><polyline points="1357.9,300.6 1357.9,313.6" fill="none" stroke="#fdf67c" stroke-width="1.32"/><polyline points="1275.8,273.5 1275.8,291.5" fill="none" stroke="#fdf67c" stroke-width="1.32"/><polyline points="1123.2,251.9 1143.4,252.6" fill="none" stroke="#fdf67c" stroke-width="1.32"/><polyline points="1358.9,280.8 1369.2,281.4" fill="none" stroke="#fdf67c" stroke-width="1.32"/><polyline points="1432.8,289.9 1432.8,305.0" fill="none" stroke="#fdf67c" stroke-width="1.32"/><polyline points="1418.8,255.0 1429.7,255.3" fill="none" stroke="#fdf67c" stroke-width="1.32"/><polyline points="1323.3,197.4 1345.2,198.5" fill="none" stroke="#fdf67c" stroke-width="1.32"/><polyline points="1368.1,233.4 1382.5,233.3" fill="none" stroke="#fdf67c" stroke-width="1.32"/><polyline points="1409.4,197.8 1413.9,198.1" fill="none" stroke="#fdf67c" stroke-width="1.32"/><polyline points="1275.4,214.9 1288.3,215.3" fill="none" stroke="#fdf67c" stroke-width="1.32"/><polyline points="1440.2,217.9 1440.2,226.1" fill="none" stroke="#fdf67c" stroke-width="1.32"/><polyline points="1349.3,211.7 1349.3,228.4" fill="none" stroke="#fdf67c" stroke-width="1.32"/><polyline points="1342.5,239.7 1352.4,240.2" fill="none" stroke="#fdf67c" stroke-width="1.32"/><polyline points="1169.4,238.4 1189.9,239.6" fill="none" stroke="#fdf67c" stroke-width="1.32"/><polyline points="1239.2,256.2 1239.2,262.1" fill="none" stroke="#fdf67c" stroke-width="1.32"/><polyline points="1281.2,285.9 1298.0,287.3" fill="none" stroke="#fdf67c" stroke-width="1.32"/><polyline points="1198.8,207.8 1198.8,215.6" fill="none" stroke="#fdf67c" stroke-width="1.32"/><polyline points="1175.3,236.4 1188.2,235.9" fill="none" stroke="#fdf67c" stroke-width="1.32"/><polyline points="1409.7,302.9 1409.7,307.9" fill="none" stroke="#fdf67c" stroke-width="1.32"/><polyline points="1106.8,290.1 1106.8,304.0" fill="none" stroke="#fdf67c" stroke-width="1.32"/><polyline points="1309.0,224.2 1313.3,223.1" fill="none" stroke="#fdf67c" stroke-width="1.32"/><polyline points="1265.6,190.9 1273.8,189.8" fill="none" stroke="#fdf67c" stroke-width="1.32"/><polyline points="1112.6,261.6 1112.6,274.4" fill="none" stroke="#fdf67c" stroke-width="1.32"/><polyline points="1340.6,282.5 1357.0,281.6" fill="none" stroke="#fdf67c" stroke-width="1.32"/><polyline points="1273.2,208.9 1273.2,219.5" fill="none" stroke="#fdf67c" stroke-width="1.32"/><polyline points="1362.8,209.0 1362.8,217.8" fill="none" stroke="#fdf67c" stroke-width="1.32"/><polyline points="1356.5,248.9 1374.1,248.6" fill="none" stroke="#fdf67c" stroke-width="1.32"/><polyline points="1392.0,294.0 1392.0,311.1" fill="none" stroke="#fdf67c" stroke-width="1.32"/><polyline points="1365.9,203.2 1365.9,216.0" fill="none" stroke="#fdf67c" stroke-width="1.32"/><polyline points="1436.2,232.1 1456.1,233.0" fill="none" stroke="#fdf67c" stroke-width="1.32"/><polyline points="1449.1,242.3 1456.8,242.9" fill="none" stroke="#fdf67c" stroke-width="1.32"/><polyline points="1401.9,263.1 1409.7,264.3" fill="none" stroke="#fdf67c" stroke-width="1.32"/><polyline points="1462.7,302.4 1480.9,301.8" fill="none" stroke="#fdf67c" stroke-width="1.32"/><polyline points="1436.2,288.1 1436.2,293.3" fill="none" stroke="#fdf67c" stroke-width="1.32"/><polyline points="1260.3,252.4 1273.1,251.0" fill="none" stroke="#fdf67c" stroke-width="1.32"/><polyline points="1398.4,195.5 1405.5,195.0" fill="none" stroke="#fdf67c" stroke-width="1.32"/><polyline points="1390.5,204.4 1390.5,215.7" fill="none" stroke="#fdf67c" stroke-width="1.32"/><polyline points="1366.3,286.3 1387.4,286.3" fill="none" stroke="#fdf67c" stroke-width="1.32"/><polyline points="1450.9,198.1 1450.9,209.4" fill="none" stroke="#fdf67c" stroke-width="1.32"/><polyline points="1203.8,273.3 1217.2,274.3" fill="none" stroke="#fdf67c" stroke-width="1.32"/><polyline points="1305.0,224.5 1305.0,240.3" fill="none" stroke="#fdf67c" stroke-width="1.32"/><polyline points="1432.7,212.4 1454.1,212.4" fill="none" stroke="#fdf67c" stroke-width="1.32"/><polyline points="1309.9,211.5 1322.9,211.8" fill="none" stroke="#fdf67c" stroke-width="1.32"/><polyline points="1105.4,301.4 1116.6,302.3" fill="none" stroke="#fdf67c" stroke-width="1.32"/><polyline points="1306.1,245.5 1311.3,245.6" fill="none" stroke="#fdf67c" stroke-width="1.32"/><polyline points="1250.2,300.0 1259.0,299.9" fill="none" stroke="#fdf67c" stroke-width="1.32"/><polyline points="1142.6,238.7 1162.8,238.7" fill="none" stroke="#fdf67c" stroke-width="1.32"/><polyline points="1214.0,210.4 1234.6,209.3" fill="none" stroke="#fdf67c" stroke-width="1.32"/><polyline points="1387.2,190.7 1387.2,197.8" fill="none" stroke="#fdf67c" stroke-width="1.32"/><polyline points="1352.6,225.7 1352.6,238.4" fill="none" stroke="#fdf67c" stroke-width="1.32"/><polyline points="1134.3,273.5 1134.3,284.7" fill="none" stroke="#fdf67c" stroke-width="1.32"/><polyline points="1189.0,211.1 1200.8,210.8" fill="none" stroke="#fdf67c" stroke-width="1.32"/><polyline points="1250.0,249.9 1250.0,256.8" fill="none" stroke="#fdf67c" stroke-width="1.32"/><polyline points="1331.7,262.7 1351.1,263.0" fill="none" stroke="#fdf67c" stroke-width="1.32"/><polyline points="1416.3,215.2 1434.9,216.4" fill="none" stroke="#fdf67c" stroke-width="1.32"/><polyline points="1213.5,224.9 1221.4,226.3" fill="none" stroke="#fdf67c" stroke-width="1.32"/><polyline points="1427.8,203.7 1427.8,217.8" fill="none" stroke="#fdf67c" stroke-width="1.32"/><polyline points="1192.3,199.4 1203.9,200.2" fill="none" stroke="#fdf67c" stroke-width="1.32"/><polyline points="1142.3,235.1 1146.6,234.2" fill="none" stroke="#fdf67c" stroke-width="1.32"/><polyline points="1350.9,294.6 1357.0,294.6" fill="none" stroke="#fdf67c" stroke-width="1.32"/><polyline points="1379.3,246.8 1386.7,245.5" fill="none" stroke="#fdf67c" stroke-width="1.32"/><polyline points="1134.8,192.4 1148.1,192.6" fill="none" stroke="#fdf67c" stroke-width="1.32"/><polyline points="1150.0,209.6 1150.0,225.4" fill="none" stroke="#fdf67c" stroke-width="1.32"/><polyline points="1466.4,296.4 1466.4,301.3" fill="none" stroke="#fdf67c" stroke-width="1.32"/><polyline points="1451.8,242.1 1461.7,242.0" fill="none" stroke="#fdf67c" stroke-width="1.32"/><polyline points="1288.2,238.3 1292.5,238.9" fill="none" stroke="#fdf67c" stroke-width="1.32"/><polyline points="1411.6,209.2 1411.6,223.6" fill="none" stroke="#fdf67c" stroke-width="1.32"/><polyline points="1247.0,210.8 1247.0,222.0" fill="none" stroke="#fdf67c" stroke-width="1.32"/><polyline points="1100.8,292.5 1117.5,293.6" fill="none" stroke="#fdf67c" stroke-width="1.32"/><polyline points="1331.0,235.3 1344.1,236.8" fill="none" stroke="#fdf67c" stroke-width="1.32"/><polyline points="1396.8,218.2 1414.2,219.1" fill="none" stroke="#fdf67c" stroke-width="1.32"/><polyline points="1400.5,235.5 1420.3,236.0" fill="none" stroke="#fdf67c" stroke-width="1.32"/><polyline points="1382.7,277.5 1382.7,291.6" fill="none" stroke="#fdf67c" stroke-width="1.32"/><polyline points="1121.5,228.0 1121.5,232.1" fill="none" stroke="#fdf67c" stroke-width="1.32"/><polyline points="1228.4,262.7 1236.5,264.1" fill="none" stroke="#fdf67c" stroke-width="1.32"/><polyline points="1344.8,227.5 1359.0,227.6" fill="none" stroke="#fdf67c" stroke-width="1.32"/><polyline points="1241.1,305.0 1257.7,305.8" fill="none" stroke="#fdf67c" stroke-width="1.32"/><polyline points="1462.5,190.7 1479.8,189.9" fill="none" stroke="#fdf67c" stroke-width="1.32"/><rect x="1366.1" y="268.8" width="2.2" height="2.1" fill="#fffdd6"/><rect x="1352.6" y="299.6" width="3.4" height="2.4" fill="#fdf67c"/><rect x="1381.1" y="302.8" width="3.7" height="3.1" fill="#fffdd6"/><rect x="1383.8" y="294.3" width="1.7" height="3.3" fill="#fffdd6"/><rect x="1372.5" y="273.1" width="3.2" height="2.6" fill="#fffdd6"/><rect x="1415.1" y="282.1" width="3.3" height="2.6" fill="#fffdd6"/><rect x="1355.7" y="290.6" width="3.5" height="1.9" fill="#fdf67c"/><rect x="1356.6" y="267.5" width="2.4" height="1.3" fill="#fffdd6"/><rect x="1397.9" y="281.0" width="4.6" height="2.9" fill="#fffdd6"/><rect x="1419.0" y="301.0" width="1.8" height="3.3" fill="#fffdd6"/><rect x="1373.0" y="302.0" width="2.4" height="2.4" fill="#fdf67c"/><rect x="1395.0" y="283.9" width="4.9" height="3.1" fill="#fdf67c"/><rect x="1340.4" y="289.5" width="3.1" height="1.7" fill="#fffdd6"/><rect x="1377.5" y="271.5" width="3.1" height="2.7" fill="#fffdd6"/><rect x="1353.6" y="288.0" width="3.0" height="3.0" fill="#fdf67c"/><rect x="1419.8" y="301.3" width="4.1" height="1.7" fill="#fffdd6"/><rect x="1410.3" y="295.2" width="3.7" height="2.0" fill="#fffdd6"/><rect x="1391.7" y="287.3" width="3.6" height="2.7" fill="#fdf67c"/><rect x="1347.1" y="276.0" width="4.9" height="3.3" fill="#fdf67c"/><rect x="1333.6" y="269.2" width="2.4" height="2.2" fill="#fdf67c"/><rect x="1339.2" y="286.5" width="1.8" height="1.4" fill="#fdf67c"/><rect x="1379.6" y="289.7" width="2.8" height="2.3" fill="#fffdd6"/><rect x="1360.9" y="293.8" width="4.4" height="1.4" fill="#fffdd6"/><rect x="1402.8" y="289.5" width="4.2" height="1.7" fill="#fffdd6"/><rect x="1353.2" y="296.2" width="2.8" height="2.7" fill="#fdf67c"/><rect x="1359.3" y="286.8" width="4.1" height="3.3" fill="#fffdd6"/><rect x="1363.2" y="270.5" width="4.6" height="1.4" fill="#fffdd6"/><rect x="1380.8" y="284.5" width="3.9" height="1.9" fill="#fdf67c"/><rect x="1336.8" y="274.7" width="3.8" height="1.4" fill="#fffdd6"/><rect x="1395.2" y="292.0" width="2.5" height="1.5" fill="#fffdd6"/><rect x="1395.3" y="280.2" width="1.9" height="2.8" fill="#fdf67c"/><rect x="1412.7" y="300.8" width="4.7" height="2.2" fill="#fdf67c"/><rect x="1357.4" y="278.4" width="2.9" height="3.3" fill="#fdf67c"/><rect x="1352.3" y="280.0" width="2.8" height="2.0" fill="#fffdd6"/><rect x="1364.9" y="274.0" width="3.5" height="3.0" fill="#fdf67c"/><rect x="1405.3" y="287.3" width="2.1" height="2.9" fill="#fdf67c"/><rect x="1355.3" y="267.8" width="3.3" height="2.5" fill="#fdf67c"/><rect x="1417.0" y="290.4" width="4.3" height="1.3" fill="#fdf67c"/><rect x="1400.9" y="270.0" width="1.8" height="2.9" fill="#fdf67c"/><rect x="1337.6" y="289.8" width="2.0" height="2.9" fill="#fdf67c"/><rect x="1352.1" y="274.9" width="4.2" height="2.4" fill="#fdf67c"/><rect x="1365.5" y="279.2" width="4.9" height="2.7" fill="#fffdd6"/><rect x="1378.4" y="293.0" width="4.0" height="3.3" fill="#fffdd6"/><rect x="1404.4" y="291.0" width="4.5" height="3.1" fill="#fdf67c"/><rect x="1410.0" y="301.5" width="3.7" height="2.4" fill="#fdf67c"/><rect x="1402.2" y="282.2" width="3.0" height="1.5" fill="#fdf67c"/><rect x="1419.2" y="280.5" width="2.1" height="1.7" fill="#fffdd6"/><rect x="1356.3" y="301.9" width="1.7" height="1.9" fill="#fffdd6"/><rect x="1388.3" y="294.9" width="2.1" height="1.3" fill="#fffdd6"/><rect x="1382.6" y="299.7" width="1.6" height="1.4" fill="#fffdd6"/><rect x="1349.6" y="275.5" width="4.0" height="2.6" fill="#fffdd6"/><rect x="1346.6" y="277.1" width="2.1" height="2.9" fill="#fffdd6"/><rect x="1379.3" y="296.4" width="3.2" height="1.8" fill="#fdf67c"/><rect x="1412.3" y="279.3" width="3.4" height="3.4" fill="#fffdd6"/><rect x="1349.9" y="268.8" width="4.8" height="3.0" fill="#fffdd6"/><rect x="1377.5" y="285.6" width="2.5" height="3.5" fill="#fdf67c"/><rect x="1351.4" y="267.4" width="3.2" height="2.1" fill="#fdf67c"/><rect x="1394.2" y="288.8" width="2.1" height="1.6" fill="#fffdd6"/><rect x="1353.3" y="298.3" width="3.3" height="2.7" fill="#fdf67c"/><rect x="1354.0" y="286.2" width="2.0" height="3.0" fill="#fffdd6"/><rect x="1403.9" y="297.5" width="4.4" height="1.4" fill="#fffdd6"/><rect x="1394.5" y="270.5" width="3.2" height="2.3" fill="#fdf67c"/><rect x="1382.8" y="297.9" width="2.6" height="3.0" fill="#fffdd6"/><rect x="1412.5" y="270.3" width="4.4" height="1.7" fill="#fdf67c"/><rect x="1377.3" y="272.7" width="4.4" height="1.9" fill="#fffdd6"/><rect x="1336.8" y="278.0" width="3.1" height="2.8" fill="#fffdd6"/><rect x="1391.8" y="270.8" width="2.9" height="2.3" fill="#fdf67c"/><rect x="1404.7" y="290.5" width="1.5" height="2.1" fill="#fdf67c"/><rect x="1351.4" y="287.3" width="3.1" height="1.2" fill="#fdf67c"/><rect x="1402.0" y="274.4" width="3.7" height="1.9" fill="#fffdd6"/><rect x="1378.6" y="277.7" width="2.7" height="2.1" fill="#fdf67c"/><rect x="1353.1" y="274.2" width="4.1" height="2.0" fill="#fdf67c"/><rect x="1380.7" y="293.1" width="2.7" height="3.1" fill="#fffdd6"/><rect x="1342.7" y="270.4" width="3.9" height="2.8" fill="#fffdd6"/><rect x="1366.2" y="297.1" width="3.6" height="1.4" fill="#fffdd6"/><rect x="1344.1" y="271.5" width="2.9" height="1.4" fill="#fdf67c"/><rect x="1368.4" y="285.4" width="3.8" height="3.0" fill="#fdf67c"/><rect x="1364.7" y="278.9" width="2.9" height="1.2" fill="#fffdd6"/><rect x="1393.0" y="302.4" width="4.3" height="2.7" fill="#fdf67c"/><rect x="1331.7" y="278.9" width="2.7" height="2.7" fill="#fffdd6"/><rect x="1364.0" y="285.3" width="4.3" height="3.1" fill="#fdf67c"/><rect x="1344.3" y="294.6" width="4.7" height="2.5" fill="#fffdd6"/><rect x="1375.0" y="272.1" width="4.0" height="3.5" fill="#fdf67c"/><rect x="1394.4" y="297.1" width="2.2" height="3.4" fill="#fdf67c"/><rect x="1347.8" y="270.0" width="2.4" height="2.5" fill="#fdf67c"/><rect x="1359.6" y="300.4" width="2.8" height="2.3" fill="#fffdd6"/><rect x="1417.6" y="271.9" width="4.7" height="2.4" fill="#fdf67c"/><rect x="1380.4" y="276.5" width="4.7" height="3.5" fill="#fdf67c"/><rect x="1384.1" y="271.4" width="4.4" height="1.9" fill="#fdf67c"/><rect x="1351.7" y="287.6" width="4.4" height="1.6" fill="#fdf67c"/><rect x="1308.8" y="228.8" width="2.1" height="3.5" fill="#fdf67c"/><rect x="1337.9" y="235.4" width="3.8" height="2.9" fill="#fffdd6"/><rect x="1334.6" y="247.3" width="1.6" height="1.7" fill="#fffdd6"/><rect x="1312.1" y="237.3" width="3.5" height="1.6" fill="#fdf67c"/><rect x="1318.2" y="241.6" width="2.7" height="2.7" fill="#fffdd6"/><rect x="1338.5" y="231.5" width="4.9" height="2.6" fill="#fffdd6"/><rect x="1325.6" y="243.0" width="3.9" height="2.9" fill="#fdf67c"/><rect x="1329.3" y="251.9" width="4.4" height="3.2" fill="#fffdd6"/><rect x="1326.7" y="241.6" width="4.7" height="2.4" fill="#fdf67c"/><rect x="1326.6" y="249.7" width="2.6" height="1.3" fill="#fdf67c"/><rect x="1350.0" y="245.6" width="3.6" height="2.9" fill="#fffdd6"/><rect x="1334.7" y="229.7" width="1.9" height="2.2" fill="#fdf67c"/><rect x="1324.8" y="229.2" width="3.9" height="2.4" fill="#fffdd6"/><rect x="1320.3" y="237.5" width="2.3" height="1.4" fill="#fdf67c"/><rect x="1353.3" y="244.0" width="4.5" height="2.2" fill="#fdf67c"/><rect x="1316.1" y="245.9" width="3.5" height="3.3" fill="#fffdd6"/><rect x="1344.6" y="231.0" width="3.4" height="3.4" fill="#fffdd6"/><rect x="1317.2" y="235.2" width="2.6" height="1.3" fill="#fdf67c"/><rect x="1345.8" y="237.5" width="2.7" height="2.5" fill="#fffdd6"/><rect x="1306.6" y="249.6" width="2.6" height="2.3" fill="#fdf67c"/><rect x="1353.9" y="239.3" width="2.2" height="1.9" fill="#fdf67c"/><rect x="1349.8" y="232.7" width="4.4" height="2.0" fill="#fffdd6"/><rect x="1313.6" y="249.1" width="5.0" height="1.7" fill="#fdf67c"/><rect x="1314.6" y="249.1" width="1.7" height="1.4" fill="#fdf67c"/><rect x="1320.6" y="249.6" width="4.5" height="2.8" fill="#fffdd6"/><rect x="1339.8" y="250.5" width="3.1" height="1.4" fill="#fffdd6"/><rect x="1320.4" y="245.1" width="2.2" height="1.6" fill="#fffdd6"/><rect x="1338.2" y="247.0" width="2.8" height="2.7" fill="#fdf67c"/><rect x="1334.5" y="233.5" width="2.6" height="3.3" fill="#fdf67c"/><rect x="1318.8" y="243.4" width="1.8" height="3.5" fill="#fffdd6"/><rect x="1202.8" y="262.5" width="1.7" height="2.6" fill="#fffdd6"/><rect x="1175.1" y="266.9" width="1.8" height="1.9" fill="#fdf67c"/><rect x="1174.6" y="258.5" width="3.4" height="1.6" fill="#fdf67c"/><rect x="1248.8" y="254.5" width="3.1" height="2.9" fill="#fffdd6"/><rect x="1242.9" y="262.0" width="2.1" height="2.5" fill="#fdf67c"/><rect x="1186.0" y="264.5" width="4.2" height="2.4" fill="#fdf67c"/><rect x="1234.5" y="264.9" width="3.3" height="3.4" fill="#fffdd6"/><rect x="1228.0" y="256.6" width="3.6" height="1.7" fill="#fffdd6"/><rect x="1227.3" y="266.6" width="4.3" height="1.7" fill="#fffdd6"/><rect x="1172.1" y="263.3" width="3.2" height="1.3" fill="#fdf67c"/><rect x="1221.5" y="263.2" width="4.6" height="1.6" fill="#fffdd6"/><rect x="1151.8" y="261.9" width="3.0" height="2.2" fill="#fffdd6"/><rect x="1229.9" y="255.2" width="4.7" height="2.5" fill="#fdf67c"/><rect x="1229.2" y="257.8" width="2.0" height="1.9" fill="#fffdd6"/><rect x="1181.4" y="263.9" width="3.3" height="1.8" fill="#fdf67c"/><rect x="1158.8" y="267.1" width="2.1" height="1.8" fill="#fffdd6"/><rect x="1219.1" y="267.3" width="4.3" height="1.3" fill="#fffdd6"/><rect x="1186.4" y="257.5" width="4.9" height="1.3" fill="#fffdd6"/><rect x="1226.1" y="269.8" width="2.0" height="2.2" fill="#fdf67c"/><rect x="1153.9" y="257.8" width="4.6" height="1.5" fill="#fffdd6"/><rect x="1179.8" y="260.8" width="1.8" height="1.3" fill="#fdf67c"/><rect x="1226.3" y="265.7" width="2.3" height="1.8" fill="#fdf67c"/><rect x="1174.2" y="261.4" width="4.8" height="2.0" fill="#fffdd6"/><rect x="1248.1" y="263.8" width="1.6" height="2.1" fill="#fdf67c"/><rect x="1155.9" y="259.5" width="3.9" height="3.2" fill="#fdf67c"/><rect x="1238.6" y="261.4" width="2.9" height="3.1" fill="#fffdd6"/><rect x="1228.1" y="257.4" width="2.7" height="1.6" fill="#fdf67c"/><rect x="1166.4" y="257.3" width="2.3" height="2.3" fill="#fffdd6"/><rect x="1194.7" y="269.9" width="3.9" height="3.2" fill="#fffdd6"/><rect x="1188.3" y="255.2" width="3.9" height="2.0" fill="#fffdd6"/><rect x="1151.9" y="256.9" width="2.4" height="2.1" fill="#fdf67c"/><rect x="1221.5" y="258.3" width="2.8" height="1.6" fill="#fdf67c"/><rect x="1186.0" y="266.3" width="4.0" height="3.3" fill="#fffdd6"/><rect x="1182.2" y="260.2" width="1.8" height="3.2" fill="#fffdd6"/><rect x="1227.1" y="262.3" width="1.7" height="2.1" fill="#fffdd6"/><rect x="1154.1" y="256.4" width="3.6" height="1.3" fill="#fffdd6"/><rect x="1192.4" y="262.7" width="2.0" height="2.8" fill="#fffdd6"/><rect x="1222.5" y="264.7" width="2.0" height="1.7" fill="#fffdd6"/><rect x="1221.3" y="260.5" width="2.9" height="3.2" fill="#fffdd6"/><rect x="1179.2" y="259.5" width="2.3" height="1.3" fill="#fffdd6"/><rect x="1213.0" y="263.1" width="4.3" height="3.4" fill="#fffdd6"/><rect x="1217.0" y="268.7" width="2.3" height="2.8" fill="#fdf67c"/><rect x="1245.5" y="267.9" width="2.3" height="2.7" fill="#fffdd6"/><rect x="1192.8" y="260.3" width="1.7" height="2.1" fill="#fffdd6"/><rect x="1199.7" y="258.5" width="2.1" height="2.1" fill="#fffdd6"/><rect x="1166.7" y="264.6" width="2.3" height="1.4" fill="#fffdd6"/><rect x="1192.2" y="256.4" width="3.5" height="2.8" fill="#fdf67c"/><rect x="1220.0" y="254.4" width="2.9" height="2.0" fill="#fffdd6"/><rect x="1190.4" y="254.9" width="3.2" height="2.5" fill="#fffdd6"/><rect x="1182.6" y="258.1" width="1.6" height="2.0" fill="#fdf67c"/><rect x="1303.7" y="219.1" width="3.8" height="1.6" fill="#fffdd6"/><rect x="1306.5" y="227.5" width="2.8" height="2.5" fill="#fdf67c"/><rect x="1315.2" y="223.5" width="3.7" height="2.1" fill="#fffdd6"/><rect x="1287.5" y="226.0" width="4.6" height="2.1" fill="#fdf67c"/><rect x="1274.1" y="217.6" width="3.3" height="1.9" fill="#fffdd6"/><rect x="1326.7" y="217.8" width="2.2" height="1.7" fill="#fdf67c"/><rect x="1285.1" y="216.0" width="3.4" height="2.1" fill="#fffdd6"/><rect x="1299.6" y="223.8" width="3.4" height="2.6" fill="#fdf67c"/><rect x="1318.5" y="227.6" width="2.7" height="2.0" fill="#fdf67c"/><rect x="1289.5" y="224.6" width="3.9" height="2.8" fill="#fdf67c"/><rect x="1318.2" y="217.9" width="3.7" height="2.3" fill="#fdf67c"/><rect x="1292.7" y="219.4" width="4.1" height="2.4" fill="#fffdd6"/><rect x="1286.0" y="219.9" width="2.1" height="2.4" fill="#fffdd6"/><rect x="1275.5" y="216.8" width="1.9" height="2.8" fill="#fffdd6"/><rect x="1297.3" y="225.3" width="3.2" height="1.6" fill="#fdf67c"/><rect x="1320.7" y="216.6" width="2.4" height="2.4" fill="#fdf67c"/><rect x="1294.0" y="224.6" width="2.4" height="2.8" fill="#fffdd6"/><rect x="1290.7" y="225.1" width="4.4" height="3.1" fill="#fdf67c"/><rect x="1295.6" y="224.5" width="3.7" height="3.1" fill="#fdf67c"/><rect x="1279.0" y="220.5" width="3.8" height="1.7" fill="#fffdd6"/><rect x="1272.8" y="223.0" width="4.8" height="3.4" fill="#fffdd6"/><rect x="1310.5" y="221.0" width="3.7" height="2.1" fill="#fdf67c"/><rect x="1327.4" y="216.6" width="4.0" height="1.5" fill="#fffdd6"/><rect x="1288.0" y="224.8" width="5.0" height="1.5" fill="#fffdd6"/><rect x="1273.5" y="222.5" width="3.2" height="2.1" fill="#fffdd6"/><rect x="1157.0" y="267.4" width="2.5" height="2.1" fill="#fdf67c"/><rect x="1155.6" y="269.7" width="2.9" height="2.8" fill="#fdf67c"/><rect x="1157.0" y="256.4" width="2.1" height="1.4" fill="#fdf67c"/><rect x="1135.1" y="261.8" width="1.9" height="1.9" fill="#fffdd6"/><rect x="1147.6" y="256.3" width="3.7" height="1.8" fill="#fffdd6"/><rect x="1144.3" y="259.9" width="2.4" height="1.3" fill="#fffdd6"/><rect x="1160.7" y="258.9" width="1.8" height="1.6" fill="#fffdd6"/><rect x="1164.9" y="257.2" width="4.5" height="2.3" fill="#fffdd6"/><rect x="1157.3" y="260.3" width="1.7" height="2.5" fill="#fdf67c"/><rect x="1149.9" y="258.4" width="4.8" height="3.2" fill="#fdf67c"/><rect x="1142.7" y="267.3" width="4.0" height="1.6" fill="#fffdd6"/><rect x="1131.8" y="255.9" width="1.8" height="2.0" fill="#fdf67c"/><rect x="1137.4" y="262.2" width="1.5" height="1.7" fill="#fdf67c"/><rect x="1125.4" y="262.4" width="4.3" height="3.0" fill="#fdf67c"/><rect x="1141.0" y="266.8" width="4.4" height="3.0" fill="#fdf67c"/><rect x="1129.0" y="269.2" width="2.9" height="2.8" fill="#fffdd6"/><rect x="1161.4" y="254.4" width="3.5" height="1.7" fill="#fffdd6"/><rect x="1139.8" y="264.5" width="4.3" height="2.0" fill="#fdf67c"/><rect x="1139.2" y="258.5" width="4.7" height="1.9" fill="#fffdd6"/><rect x="1138.4" y="265.9" width="2.2" height="2.9" fill="#fdf67c"/><rect x="1425.4" y="238.5" width="1.9" height="1.5" fill="#fffdd6"/><rect x="1417.9" y="235.2" width="3.3" height="2.1" fill="#fffdd6"/><rect x="1421.1" y="254.0" width="2.2" height="3.2" fill="#fffdd6"/><rect x="1427.6" y="237.2" width="5.0" height="2.2" fill="#fdf67c"/><rect x="1411.6" y="243.2" width="4.0" height="1.6" fill="#fffdd6"/><rect x="1425.3" y="254.0" width="2.6" height="1.6" fill="#fffdd6"/><rect x="1434.7" y="238.0" width="3.7" height="2.1" fill="#fdf67c"/><rect x="1411.4" y="247.3" width="4.6" height="3.2" fill="#fdf67c"/><rect x="1420.1" y="246.4" width="1.9" height="3.1" fill="#fdf67c"/><rect x="1418.6" y="248.3" width="3.0" height="2.1" fill="#fffdd6"/><rect x="1423.0" y="246.5" width="3.3" height="1.3" fill="#fdf67c"/><rect x="1418.4" y="246.9" width="3.6" height="3.3" fill="#fffdd6"/><rect x="1419.1" y="254.9" width="4.1" height="1.9" fill="#fdf67c"/><rect x="1434.7" y="243.0" width="4.5" height="1.5" fill="#fdf67c"/><rect x="1419.7" y="239.7" width="4.4" height="2.7" fill="#fdf67c"/><rect x="1429.9" y="251.0" width="3.3" height="3.5" fill="#fffdd6"/><rect x="1431.1" y="249.2" width="2.4" height="3.1" fill="#fffdd6"/><rect x="1421.1" y="252.3" width="2.2" height="1.8" fill="#fdf67c"/><rect x="1407.2" y="246.1" width="4.3" height="2.3" fill="#fffdd6"/><rect x="1429.0" y="252.1" width="4.2" height="2.5" fill="#fdf67c"/><rect x="1253.1" y="202.2" width="2.8" height="1.4" fill="#fffdd6"/><rect x="1233.2" y="207.9" width="4.4" height="1.5" fill="#fffdd6"/><rect x="1235.1" y="207.8" width="3.7" height="3.3" fill="#fffdd6"/><rect x="1261.5" y="202.7" width="3.7" height="3.2" fill="#fdf67c"/><rect x="1226.7" y="206.3" width="3.0" height="1.2" fill="#fffdd6"/><rect x="1231.9" y="206.0" width="2.5" height="2.6" fill="#fdf67c"/><rect x="1225.9" y="202.0" width="3.9" height="2.3" fill="#fffdd6"/><rect x="1223.1" y="208.5" width="3.6" height="2.0" fill="#fffdd6"/><rect x="1261.8" y="206.5" width="4.1" height="2.0" fill="#fffdd6"/><rect x="1236.0" y="202.2" width="3.7" height="2.2" fill="#fdf67c"/><rect x="1236.0" y="204.7" width="3.3" height="3.4" fill="#fffdd6"/><rect x="1249.0" y="202.9" width="3.5" height="1.9" fill="#fdf67c"/><line x1="1377.9" y1="294.6" x2="1404.6" y2="296.1" stroke="#fdf67c" stroke-width="1.5"/><line x1="1303.6" y1="282.5" x2="1323.9" y2="284.9" stroke="#fffdd6" stroke-width="1.5"/><line x1="1358.6" y1="272.8" x2="1358.6" y2="286.5" stroke="#fffdd6" stroke-width="1.5"/><line x1="1327.1" y1="274.3" x2="1349.9" y2="272.3" stroke="#fdf67c" stroke-width="1.5"/><line x1="1317.3" y1="289.2" x2="1317.3" y2="294.2" stroke="#fdf67c" stroke-width="1.5"/><line x1="1326.2" y1="271.5" x2="1351.4" y2="270.2" stroke="#fdf67c" stroke-width="1.5"/><line x1="1367.4" y1="291.8" x2="1367.4" y2="310.9" stroke="#fdf67c" stroke-width="1.5"/><line x1="1420.8" y1="301.3" x2="1420.8" y2="311.7" stroke="#fffdd6" stroke-width="1.5"/><line x1="1318.2" y1="264.9" x2="1318.2" y2="278.9" stroke="#fffdd6" stroke-width="1.5"/><line x1="1384.7" y1="276.9" x2="1384.7" y2="294.1" stroke="#fdf67c" stroke-width="1.5"/><line x1="1339.5" y1="283.2" x2="1346.7" y2="286.0" stroke="#fffdd6" stroke-width="1.5"/><line x1="1393.7" y1="299.2" x2="1393.7" y2="316.0" stroke="#fffdd6" stroke-width="1.5"/><line x1="1372.3" y1="262.4" x2="1372.3" y2="270.1" stroke="#fdf67c" stroke-width="1.5"/><line x1="1324.6" y1="295.3" x2="1351.3" y2="294.3" stroke="#fffdd6" stroke-width="1.5"/><line x1="1365.6" y1="296.1" x2="1365.6" y2="312.4" stroke="#fdf67c" stroke-width="1.5"/><line x1="1407.5" y1="263.6" x2="1415.5" y2="262.7" stroke="#fdf67c" stroke-width="1.5"/><line x1="1414.8" y1="277.0" x2="1432.8" y2="275.8" stroke="#fffdd6" stroke-width="1.5"/><line x1="1322.2" y1="265.4" x2="1322.2" y2="280.8" stroke="#fdf67c" stroke-width="1.5"/><line x1="1320.2" y1="264.1" x2="1337.9" y2="263.6" stroke="#fffdd6" stroke-width="1.5"/><line x1="1374.2" y1="298.4" x2="1374.2" y2="309.7" stroke="#fffdd6" stroke-width="1.5"/><line x1="1414.5" y1="263.4" x2="1414.5" y2="281.0" stroke="#fffdd6" stroke-width="1.5"/><line x1="1391.5" y1="303.8" x2="1414.8" y2="301.4" stroke="#fdf67c" stroke-width="1.5"/><line x1="1318.7" y1="299.2" x2="1318.7" y2="311.0" stroke="#fdf67c" stroke-width="1.5"/><line x1="1406.5" y1="304.9" x2="1406.5" y2="317.3" stroke="#fdf67c" stroke-width="1.5"/><line x1="1359.9" y1="274.8" x2="1359.9" y2="282.0" stroke="#fffdd6" stroke-width="1.5"/><line x1="1423.5" y1="304.2" x2="1440.5" y2="303.3" stroke="#fffdd6" stroke-width="1.5"/><line x1="1334.0" y1="296.4" x2="1348.0" y2="298.1" stroke="#fdf67c" stroke-width="1.5"/><line x1="1386.8" y1="291.2" x2="1400.8" y2="292.4" stroke="#fffdd6" stroke-width="1.5"/><line x1="1360.7" y1="295.9" x2="1373.2" y2="298.5" stroke="#fdf67c" stroke-width="1.5"/><line x1="1372.6" y1="262.5" x2="1372.6" y2="271.3" stroke="#fdf67c" stroke-width="1.5"/><line x1="1357.9" y1="297.9" x2="1381.4" y2="297.0" stroke="#fdf67c" stroke-width="1.5"/><line x1="1392.2" y1="298.4" x2="1392.2" y2="316.1" stroke="#fdf67c" stroke-width="1.5"/><line x1="1386.0" y1="304.9" x2="1403.4" y2="305.1" stroke="#fffdd6" stroke-width="1.5"/><line x1="1404.6" y1="303.2" x2="1404.6" y2="318.6" stroke="#fdf67c" stroke-width="1.5"/><line x1="1391.3" y1="269.6" x2="1410.1" y2="270.6" stroke="#fdf67c" stroke-width="1.5"/><line x1="1378.0" y1="296.1" x2="1399.8" y2="293.3" stroke="#fffdd6" stroke-width="1.5"/><line x1="1355.1" y1="290.6" x2="1355.1" y2="305.9" stroke="#fdf67c" stroke-width="1.5"/><line x1="1305.2" y1="282.7" x2="1305.2" y2="288.6" stroke="#fffdd6" stroke-width="1.5"/><line x1="1339.7" y1="270.0" x2="1339.7" y2="275.5" stroke="#fdf67c" stroke-width="1.5"/><line x1="1347.5" y1="288.9" x2="1358.8" y2="291.3" stroke="#fffdd6" stroke-width="1.5"/><line x1="1350.7" y1="274.3" x2="1350.7" y2="281.0" stroke="#fdf67c" stroke-width="1.5"/><line x1="1346.7" y1="263.6" x2="1354.8" y2="263.9" stroke="#fffdd6" stroke-width="1.5"/><line x1="1372.6" y1="304.2" x2="1387.8" y2="306.0" stroke="#fdf67c" stroke-width="1.5"/><line x1="1346.2" y1="268.3" x2="1364.6" y2="271.0" stroke="#fdf67c" stroke-width="1.5"/><line x1="1376.1" y1="277.4" x2="1382.1" y2="275.1" stroke="#fdf67c" stroke-width="1.5"/><line x1="1376.9" y1="268.2" x2="1402.5" y2="267.4" stroke="#fdf67c" stroke-width="1.5"/><line x1="1328.3" y1="274.8" x2="1342.6" y2="277.6" stroke="#fdf67c" stroke-width="1.5"/><line x1="1374.5" y1="273.4" x2="1391.4" y2="272.9" stroke="#fffdd6" stroke-width="1.5"/><line x1="1423.0" y1="283.6" x2="1423.0" y2="295.8" stroke="#fffdd6" stroke-width="1.5"/><line x1="1377.7" y1="281.5" x2="1377.7" y2="298.2" stroke="#fdf67c" stroke-width="1.5"/><line x1="1301.7" y1="285.4" x2="1301.7" y2="304.5" stroke="#fdf67c" stroke-width="1.5"/><line x1="1330.7" y1="273.8" x2="1330.7" y2="293.6" stroke="#fffdd6" stroke-width="1.5"/><line x1="1376.0" y1="282.9" x2="1395.3" y2="284.3" stroke="#fffdd6" stroke-width="1.5"/><line x1="1395.0" y1="275.2" x2="1395.0" y2="285.3" stroke="#fffdd6" stroke-width="1.5"/><line x1="1366.2" y1="282.4" x2="1366.2" y2="298.6" stroke="#fdf67c" stroke-width="1.5"/><line x1="1304.6" y1="273.1" x2="1304.6" y2="291.9" stroke="#fdf67c" stroke-width="1.5"/><line x1="1368.2" y1="262.6" x2="1383.6" y2="263.1" stroke="#fdf67c" stroke-width="1.5"/><line x1="1379.0" y1="283.2" x2="1393.5" y2="282.6" stroke="#fdf67c" stroke-width="1.5"/><line x1="1324.6" y1="275.0" x2="1332.0" y2="277.1" stroke="#fdf67c" stroke-width="1.5"/><line x1="1354.1" y1="274.6" x2="1380.1" y2="272.5" stroke="#fdf67c" stroke-width="1.5"/><line x1="1368.6" y1="283.9" x2="1368.6" y2="291.2" stroke="#fdf67c" stroke-width="1.5"/><line x1="1401.5" y1="265.0" x2="1401.5" y2="282.3" stroke="#fdf67c" stroke-width="1.5"/><line x1="1383.0" y1="263.1" x2="1410.5" y2="266.1" stroke="#fdf67c" stroke-width="1.5"/><line x1="1306.1" y1="299.1" x2="1306.1" y2="313.7" stroke="#fdf67c" stroke-width="1.5"/><line x1="1389.1" y1="267.9" x2="1389.1" y2="286.7" stroke="#fffdd6" stroke-width="1.5"/><line x1="1376.3" y1="280.2" x2="1376.3" y2="294.5" stroke="#fffdd6" stroke-width="1.5"/><line x1="1313.5" y1="278.7" x2="1313.5" y2="284.5" stroke="#fdf67c" stroke-width="1.5"/><line x1="1392.8" y1="300.7" x2="1392.8" y2="312.1" stroke="#fffdd6" stroke-width="1.5"/><line x1="1375.0" y1="283.5" x2="1389.3" y2="280.9" stroke="#fdf67c" stroke-width="1.5"/><line x1="1318.9" y1="289.8" x2="1318.9" y2="308.4" stroke="#fdf67c" stroke-width="1.5"/><line x1="1395.5" y1="239.9" x2="1395.5" y2="249.2" stroke="#fdf67c" stroke-width="1.3"/><line x1="1417.6" y1="247.5" x2="1417.6" y2="256.5" stroke="#fdf67c" stroke-width="1.3"/><line x1="1353.1" y1="254.1" x2="1353.1" y2="271.2" stroke="#fdf67c" stroke-width="1.3"/><line x1="1401.4" y1="234.6" x2="1409.5" y2="233.1" stroke="#fdf67c" stroke-width="1.3"/><line x1="1391.0" y1="239.2" x2="1408.5" y2="238.5" stroke="#fdf67c" stroke-width="1.3"/><line x1="1425.4" y1="232.9" x2="1432.7" y2="231.5" stroke="#fdf67c" stroke-width="1.3"/><line x1="1451.8" y1="252.4" x2="1451.8" y2="259.4" stroke="#fdf67c" stroke-width="1.3"/><line x1="1455.4" y1="252.0" x2="1464.7" y2="252.5" stroke="#fdf67c" stroke-width="1.3"/><line x1="1350.2" y1="239.1" x2="1350.2" y2="254.5" stroke="#fdf67c" stroke-width="1.3"/><line x1="1349.3" y1="243.6" x2="1349.3" y2="262.7" stroke="#fdf67c" stroke-width="1.3"/><line x1="1400.1" y1="256.1" x2="1400.1" y2="275.6" stroke="#fdf67c" stroke-width="1.3"/><line x1="1378.0" y1="249.8" x2="1378.0" y2="267.4" stroke="#fdf67c" stroke-width="1.3"/><line x1="1357.2" y1="234.9" x2="1357.2" y2="243.4" stroke="#fdf67c" stroke-width="1.3"/><line x1="1296.7" y1="258.7" x2="1296.7" y2="276.6" stroke="#fdf67c" stroke-width="1.3"/><line x1="1290.1" y1="246.1" x2="1310.9" y2="245.8" stroke="#fdf67c" stroke-width="1.3"/><line x1="1369.1" y1="235.0" x2="1369.1" y2="242.7" stroke="#fdf67c" stroke-width="1.3"/><line x1="1353.7" y1="243.6" x2="1363.3" y2="242.6" stroke="#fdf67c" stroke-width="1.3"/><line x1="1337.2" y1="236.8" x2="1337.2" y2="245.8" stroke="#fdf67c" stroke-width="1.3"/><line x1="1371.9" y1="233.0" x2="1386.8" y2="234.7" stroke="#fdf67c" stroke-width="1.3"/><line x1="1406.9" y1="252.2" x2="1406.9" y2="273.3" stroke="#fdf67c" stroke-width="1.3"/><line x1="1310.0" y1="252.1" x2="1310.0" y2="268.5" stroke="#fdf67c" stroke-width="1.3"/><line x1="1414.0" y1="236.9" x2="1414.0" y2="242.3" stroke="#fdf67c" stroke-width="1.3"/><line x1="1329.2" y1="234.3" x2="1329.2" y2="255.9" stroke="#fdf67c" stroke-width="1.3"/><line x1="1351.9" y1="241.4" x2="1351.9" y2="251.2" stroke="#fdf67c" stroke-width="1.3"/><line x1="1414.5" y1="253.5" x2="1414.5" y2="262.6" stroke="#fdf67c" stroke-width="1.3"/><line x1="1404.3" y1="260.2" x2="1420.6" y2="262.1" stroke="#fdf67c" stroke-width="1.3"/><line x1="1291.1" y1="233.8" x2="1306.9" y2="232.0" stroke="#fdf67c" stroke-width="1.3"/><line x1="1383.2" y1="261.7" x2="1383.2" y2="272.6" stroke="#fdf67c" stroke-width="1.3"/><line x1="1305.9" y1="234.1" x2="1323.7" y2="235.9" stroke="#fdf67c" stroke-width="1.3"/><line x1="1299.1" y1="239.3" x2="1299.1" y2="251.1" stroke="#fdf67c" stroke-width="1.3"/><line x1="1300.2" y1="239.7" x2="1300.2" y2="249.9" stroke="#fdf67c" stroke-width="1.3"/><line x1="1298.7" y1="233.1" x2="1309.0" y2="233.2" stroke="#fdf67c" stroke-width="1.3"/><line x1="1358.4" y1="247.9" x2="1358.4" y2="258.3" stroke="#fdf67c" stroke-width="1.3"/><line x1="1308.4" y1="248.3" x2="1328.7" y2="249.7" stroke="#fdf67c" stroke-width="1.3"/><line x1="1326.4" y1="232.5" x2="1326.4" y2="245.8" stroke="#fdf67c" stroke-width="1.3"/><line x1="1387.1" y1="243.3" x2="1410.6" y2="245.0" stroke="#fdf67c" stroke-width="1.3"/><line x1="1342.3" y1="245.5" x2="1353.7" y2="243.9" stroke="#fdf67c" stroke-width="1.3"/><line x1="1343.0" y1="234.6" x2="1368.7" y2="233.9" stroke="#fdf67c" stroke-width="1.3"/><line x1="1312.1" y1="234.5" x2="1312.1" y2="240.9" stroke="#fdf67c" stroke-width="1.3"/><line x1="1362.9" y1="249.3" x2="1362.9" y2="255.4" stroke="#fdf67c" stroke-width="1.3"/><polyline points="1290.0,288.0 1354.0,305.0 1425.0,283.0" fill="none" stroke="#fdf67c" stroke-width="2.16"/><polyline points="1300.0,270.0 1420.0,266.0 1470.0,262.0" fill="none" stroke="#fdf67c" stroke-width="1.92"/><polyline points="1290.0,258.0 1400.0,262.0" fill="none" stroke="#fdf67c" stroke-width="1.80"/><polyline points="1365.0,240.0 1365.0,300.0" fill="none" stroke="#fdf67c" stroke-width="1.92"/><polyline points="1395.0,228.0 1395.0,300.0" fill="none" stroke="#fdf67c" stroke-width="1.92"/><polyline points="1430.0,232.0 1430.0,290.0" fill="none" stroke="#fdf67c" stroke-width="1.68"/><rect x="1327" y="298" width="6" height="4" fill="#fffdd6"/><rect x="1357" y="294" width="6" height="4" fill="#fffdd6"/><rect x="1387" y="290" width="6" height="4" fill="#fffdd6"/><rect x="1337" y="281" width="6" height="4" fill="#fffdd6"/><rect x="1369" y="276" width="6" height="4" fill="#fffdd6"/><rect x="1402" y="280" width="6" height="4" fill="#fffdd6"/><rect x="1317" y="268" width="6" height="4" fill="#fffdd6"/><path d="M1381 251 L1424 250" stroke="#2c2e30" stroke-width="6"/><circle cx="993" cy="293.5" r="46.3" fill="#302c2b"/><path d="M993 294 V272" stroke="#0000ee" stroke-width="1.8"/><path d="M989.6 275 L993 267.5 L996.4 275 Z" fill="#0000ee"/><path d="M993 294 H980" stroke="#ee0000" stroke-width="1.8"/><path d="M982 291 L975.5 294 L982 297 L979 294 Z" fill="#ee0000"/><path d="M993 294 H1011" stroke="#00dd00" stroke-width="1.8"/><path d="M1010 291 L1019 294 L1010 297 Z" fill="#00dd00"/><circle cx="993" cy="294" r="4.3" fill="#a8a8a8"/><path d="M968 285.5 L974.5 294 M974.5 285.5 L968 294" stroke="#ee0000" stroke-width="1"/><path d="M1025.5 285.5 L1029 290 L1032.5 285.5 M1029 290 V295" fill="none" stroke="#00dd00" stroke-width="1"/><polygon points="1683.8,83.3 1730.0,76.0 1730.0,147.2 1683.8,138.0" fill="#ffffff"/><polygon points="1731.8,76.0 1756.6,86.0 1756.6,135.6 1731.8,147.2" fill="#ffffff"/><text x="0" y="0" font-family="Liberation Sans" font-size="20" fill="#8c8c8c" transform="translate(1692,119.5) scale(0.46,1)">Справа</text><text x="0" y="0" font-family="Liberation Sans" font-size="21" fill="#8c8c8c" transform="translate(1738,119.5) skewY(-8) scale(0.29,1)">Сзади</text></svg><div style="position:absolute;left:898px;top:159px;width:216px;height:99px;box-shadow:0 3px 8px rgba(0,0,0,0.35);background:#eee;"></div><div style="position:absolute;left:898px;top:159px;width:216px;height:50px;background:#cfcfcf;"></div><div style="position:absolute;left:916.4px;top:176.94px;font-size:12px;line-height:17px;color:#333;font-weight:400;letter-spacing:0.13px;white-space:nowrap;">Настройки поиска пересечений</div><div style="position:absolute;left:916.4px;top:224.54px;font-size:12px;line-height:17px;color:#333;font-weight:400;letter-spacing:0px;white-space:nowrap;">Очистить</div><svg style="position:absolute;left:0px;top:0px;" width="1836" height="814" viewBox="0 0 1836 814"><defs><filter id="sh" x="-20%" y="-20%" width="140%" height="140%"><feGaussianBlur stdDeviation="1.6"/></filter></defs><g transform="translate(2.5,3)" opacity="0.55" filter="url(#sh)"><path d="M807.7 253.9 L883.4 174.1" stroke="#000" stroke-width="3.2" fill="none"/><polygon points="892.4,164.7 886.8,180.1 877.4,171.1" fill="#000"/><path d="M807.7 253.9 L900.2 193.9" stroke="#000" stroke-width="3.2" fill="none"/><polygon points="911.1,186.8 902.1,200.4 895.0,189.5" fill="#000"/></g><path d="M807.7 253.9 L883.4 174.1" stroke="#c80000" stroke-width="3.2" fill="none" stroke-linecap="round"/><polygon points="892.4,164.7 886.8,180.1 877.4,171.1" fill="#c80000"/><path d="M807.7 253.9 L900.2 193.9" stroke="#c80000" stroke-width="3.2" fill="none" stroke-linecap="round"/><polygon points="911.1,186.8 902.1,200.4 895.0,189.5" fill="#c80000"/></svg>
</body></html>
